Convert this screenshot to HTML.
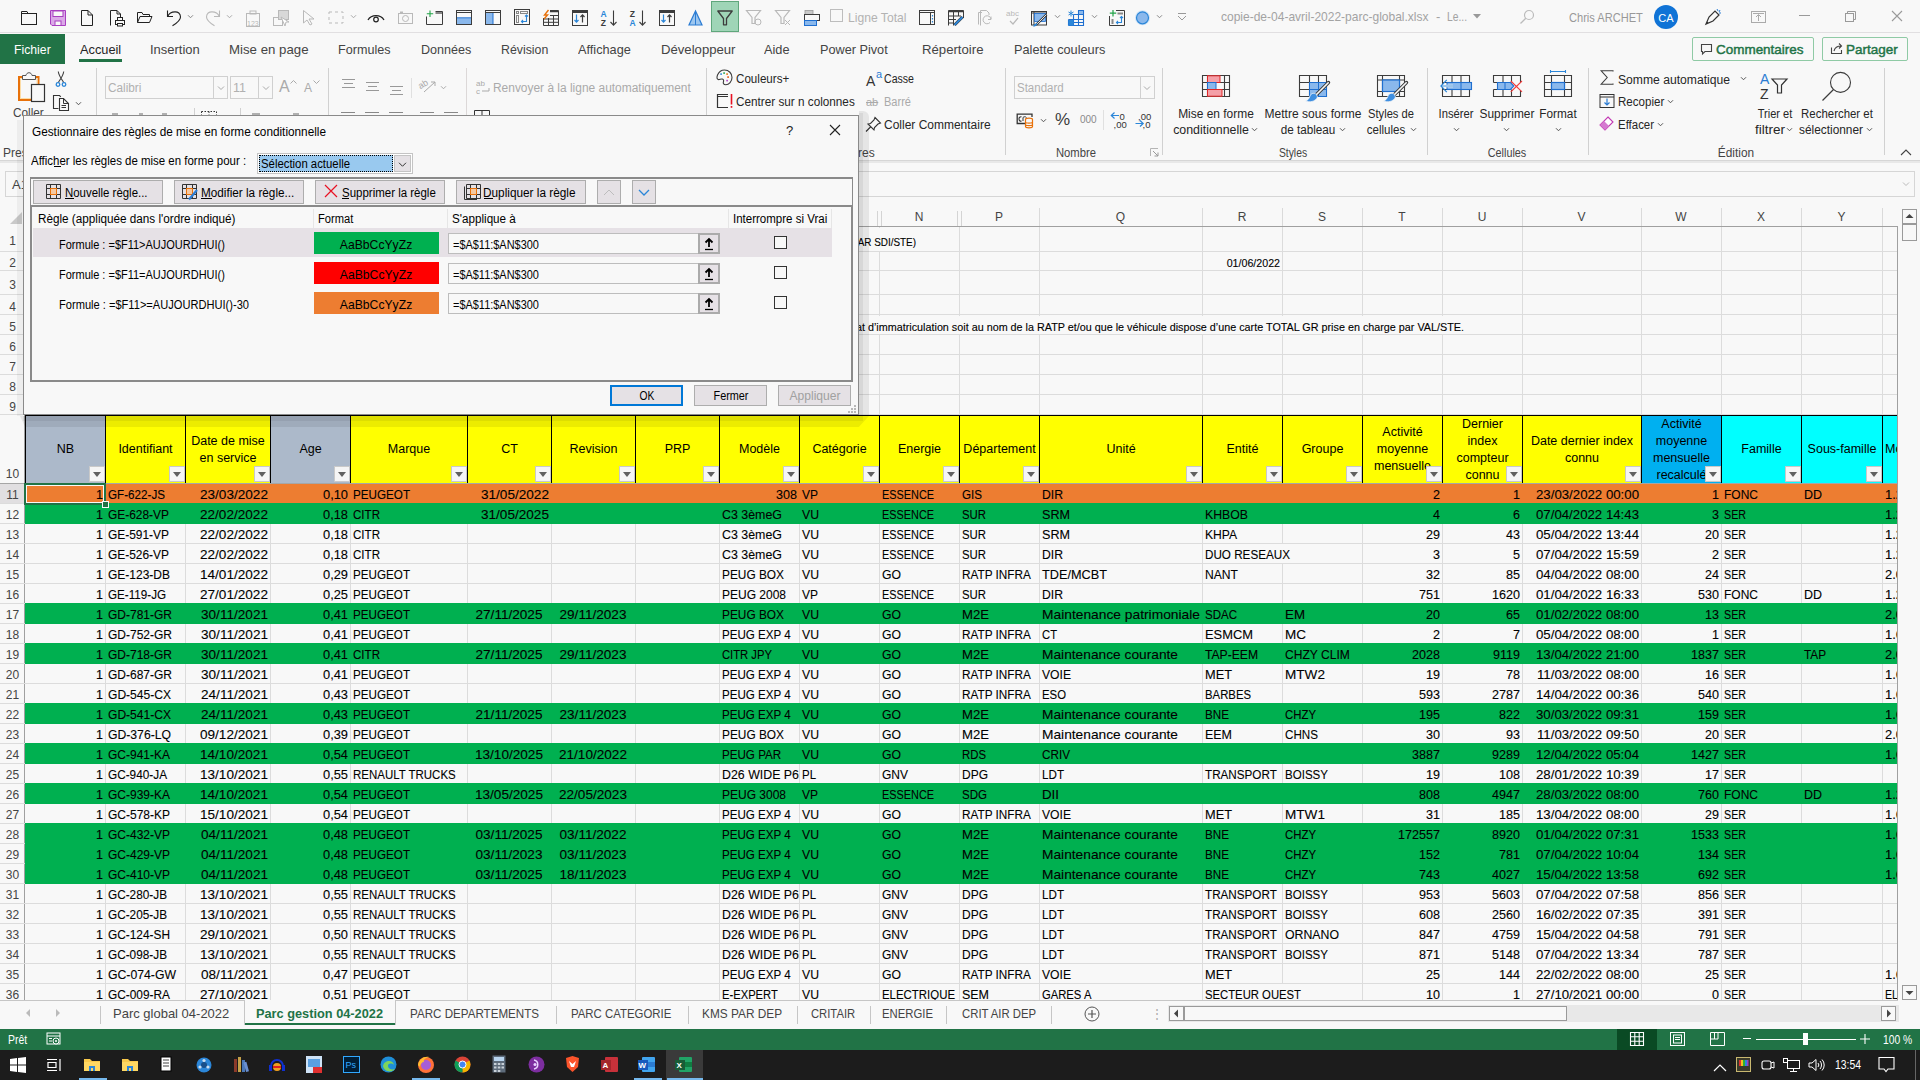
<!DOCTYPE html><html><head><meta charset="utf-8"><title>Excel</title><style>

*{margin:0;padding:0;box-sizing:border-box}
html,body{width:1920px;height:1080px;overflow:hidden}
body{position:relative;background:#f8f8f8;font-family:"Liberation Sans",sans-serif;color:#262626}
.a{position:absolute}
.t{white-space:nowrap}
.ch{text-align:center;font-size:12px;line-height:20px;color:#444}
.rh{text-align:center;font-size:12px;color:#444}
.c{font-size:13px;line-height:20px;color:#000;white-space:nowrap;-webkit-text-stroke:0.1px #000}
.hd{font-size:12.5px;line-height:17px;color:#000;text-align:center;display:flex;align-items:center;justify-content:center;white-space:nowrap}
.fb{position:absolute;width:16px;height:16px;background:#f5f5f5;border:1px solid #c9c9c9}
.fb:after{content:"";position:absolute;left:3px;top:5px;border-left:4px solid transparent;border-right:4px solid transparent;border-top:5px solid #606060}
.rb{font-size:12px;color:#262626}
.dlg{font-size:12px;color:#000}
.btn{position:absolute;background:#e5e1e5;border:1px solid #adadad}
svg{overflow:visible}

</style></head><body>
<div class="a" style="left:0;top:0;width:1920px;height:33px;background:#f8f8f8;border-bottom:1px solid #e1dfe1"></div>
<svg class="a" style="left:20px;top:10px;" width="18" height="15" viewBox="0 0 18 15"><rect x="1.5" y="3.5" width="15" height="11" fill="none" stroke="#222"/><path d="M1.5 3.5 V1.5 H7 L8 3.5" fill="none" stroke="#222"/></svg>
<svg class="a" style="left:50px;top:10px;" width="17" height="17" viewBox="0 0 17 17"><path d="M0.5 0.5 H15.5 V15.5 H2 L0.5 14 Z" fill="#dba8e8" stroke="#a83fc0"/><rect x="3" y="1" width="10" height="5.5" fill="#f8f8f8" stroke="#a83fc0"/><rect x="5" y="11" width="6" height="4.5" fill="#f8f8f8" stroke="#a83fc0"/></svg>
<svg class="a" style="left:80px;top:9px;" width="14" height="18" viewBox="0 0 14 18"><path d="M1.5 1.5 H8 L12.5 6 V16.5 H1.5 Z M8 1.5 V6 H12.5" fill="none" stroke="#222"/></svg>
<svg class="a" style="left:109px;top:9px;" width="17" height="18" viewBox="0 0 17 18"><path d="M1.5 16.5 V1.5 H8 L11.5 5 V8" fill="none" stroke="#222"/><path d="M8 1.5 V5 H11.5" fill="none" stroke="#222"/><rect x="6.5" y="11.5" width="9" height="4" fill="#f8f8f8" stroke="#222"/><rect x="8.5" y="8.5" width="5" height="3" fill="#f8f8f8" stroke="#222"/><rect x="8.5" y="14.5" width="5" height="2.5" fill="#f8f8f8" stroke="#222"/></svg>
<svg class="a" style="left:136px;top:11px;" width="17" height="13" viewBox="0 0 17 13"><path d="M1.5 11.5 V1.5 H6 L7 3.5 H13.5 V5.5" fill="none" stroke="#222"/><path d="M1.5 11.5 L4 5.5 H16 L13.5 11.5 Z" fill="none" stroke="#222"/></svg>
<svg class="a" style="left:166px;top:9px;" width="16" height="18" viewBox="0 0 16 18"><path d="M1.5 1.5 V7.5 H7" fill="none" stroke="#222" stroke-width="1.1"/><path d="M1.8 7.2 C4 2 14.5 0.5 14.5 8 C14.5 11 11 14 6.5 16.8" fill="none" stroke="#222" stroke-width="1.1"/></svg>
<svg class="a" style="left:186.5px;top:13.5px;" width="7.0" height="5.0" viewBox="0 0 7.0 5.0"><polyline points="1,1.25 3.5,3.75 6.0,1.25" fill="none" stroke="#888" stroke-width="1"/></svg>
<svg class="a" style="left:205px;top:9px;" width="16" height="18" viewBox="0 0 16 18"><path d="M14.5 1.5 V7.5 H9" fill="none" stroke="#b9b9b9" stroke-width="1.1"/><path d="M14.2 7.2 C12 2 1.5 0.5 1.5 8 C1.5 11 5 14 9.5 16.8" fill="none" stroke="#b9b9b9" stroke-width="1.1"/></svg>
<svg class="a" style="left:225.5px;top:13.5px;" width="7.0" height="5.0" viewBox="0 0 7.0 5.0"><polyline points="1,1.25 3.5,3.75 6.0,1.25" fill="none" stroke="#aaa" stroke-width="1"/></svg>
<svg class="a" style="left:245px;top:10px;" width="16" height="17" viewBox="0 0 16 17"><rect x="1.5" y="3.5" width="13" height="13" fill="none" stroke="#b9b9b9"/><rect x="5" y="1" width="6" height="3" fill="none" stroke="#b9b9b9"/><text x="2" y="16" font-size="7" fill="#b9b9b9" font-family="Liberation Sans">123</text></svg>
<svg class="a" style="left:272px;top:9px;" width="18" height="18" viewBox="0 0 18 18"><rect x="1.5" y="8.5" width="9" height="8" fill="none" stroke="#b9b9b9"/><rect x="6.5" y="1.5" width="10" height="9" fill="#d8d8d8" stroke="#b9b9b9"/><path d="M9 8 L13 17 L14 13 L17 13 Z" fill="#fff" stroke="#b9b9b9"/></svg>
<svg class="a" style="left:302px;top:9px;" width="14" height="17" viewBox="0 0 14 17"><path d="M1.5 1.5 L1.5 14 L5 11 L8 16 L10 15 L7 10 L12 10 Z" fill="none" stroke="#b9b9b9"/></svg>
<svg class="a" style="left:327px;top:10px;" width="18" height="15" viewBox="0 0 18 15"><rect x="2" y="2" width="14" height="11" fill="none" stroke="#b9b9b9" stroke-dasharray="3,3"/></svg>
<svg class="a" style="left:349.5px;top:13.5px;" width="7.0" height="5.0" viewBox="0 0 7.0 5.0"><polyline points="1,1.25 3.5,3.75 6.0,1.25" fill="none" stroke="#aaa" stroke-width="1"/></svg>
<svg class="a" style="left:367px;top:11px;" width="18" height="12" viewBox="0 0 18 12"><path d="M1 9 A9 8 0 0 1 17 9" fill="none" stroke="#222" stroke-width="1.3"/><circle cx="9" cy="8.5" r="2.3" fill="none" stroke="#222" stroke-width="1.2"/></svg>
<svg class="a" style="left:397px;top:10px;" width="17" height="15" viewBox="0 0 17 15"><rect x="1.5" y="3.5" width="14" height="10" fill="none" stroke="#b9b9b9"/><circle cx="8.5" cy="8.5" r="3" fill="none" stroke="#b9b9b9"/><rect x="3" y="1.5" width="3" height="2" fill="#b9b9b9"/></svg>
<svg class="a" style="left:426px;top:10px;" width="18" height="16" viewBox="0 0 18 16"><path d="M0.5 6.5 V14.5 H16.5 V1.5 H9.5" fill="none" stroke="#3c3c3c"/><path d="M9.5 3 H16.5" stroke="#3c3c3c" stroke-width="1.2"/><path d="M4 0.5 V7 M0.8 3.8 H7.2" stroke="#21a347" stroke-width="1.1"/></svg>
<svg class="a" style="left:456px;top:10px;" width="17" height="16" viewBox="0 0 17 16"><rect x="0.5" y="0.5" width="15" height="14" fill="none" stroke="#3c3c3c"/><path d="M0.5 2.5 H15.5" stroke="#3c3c3c"/><rect x="1" y="8" width="14" height="6" fill="#8ab8ec"/><path d="M1 7.8 H15" stroke="#1f6fd0"/></svg>
<svg class="a" style="left:485px;top:10px;" width="17" height="16" viewBox="0 0 17 16"><rect x="0.5" y="0.5" width="15" height="14" fill="none" stroke="#3c3c3c"/><path d="M0.5 2.5 H15.5" stroke="#3c3c3c"/><rect x="1" y="3" width="7" height="11" fill="#8ab8ec"/><path d="M8 3 V14" stroke="#1f6fd0"/></svg>
<svg class="a" style="left:514px;top:9px;" width="17" height="17" viewBox="0 0 17 17"><rect x="0.5" y="0.5" width="15" height="15" fill="none" stroke="#3c3c3c"/><rect x="2.5" y="2.5" width="2" height="2" fill="none" stroke="#888"/><rect x="6.5" y="2.5" width="7" height="2" fill="none" stroke="#888"/><rect x="2.5" y="6.5" width="2" height="7" fill="none" stroke="#888"/><path d="M12.5 6 V12.5 H7.5" fill="none" stroke="#2b86d8" stroke-width="1.1"/><path d="M11 7.5 L12.5 6 L14 7.5 M9 11 L7.5 12.5 L9 14" fill="none" stroke="#2b86d8" stroke-width="1.1"/></svg>
<svg class="a" style="left:543px;top:10px;" width="17" height="16" viewBox="0 0 17 16"><path d="M0.5 0.5 H15.5 V15.5 H0.5 Z M0.5 5.5 H15.5 M0.5 9 H15.5 M0.5 12.3 H15.5 M5.5 5.5 V15.5 M10.5 5.5 V15.5" fill="none" stroke="#3c3c3c"/><path d="M0.5 1.5 H15.5" stroke="#3c3c3c" stroke-width="1.5"/><rect x="0" y="0" width="7" height="8" fill="#f8f8f8"/><path d="M5.5 0 L1.5 5 H4.5 L1 9" fill="none" stroke="#e8710a" stroke-width="1.4"/></svg>
<svg class="a" style="left:572px;top:10px;" width="17" height="17" viewBox="0 0 17 17"><rect x="0.5" y="0.5" width="15" height="15" fill="none" stroke="#3c3c3c"/><path d="M0.5 2 H15.5" stroke="#3c3c3c" stroke-width="2"/><path d="M4.5 4.5 V12 M2.5 10 L4.5 12.2 L6.5 10" fill="none" stroke="#2b86d8" stroke-width="1.2"/><path d="M10.5 12.5 V5 M8.5 7 L10.5 4.8 L12.5 7" fill="none" stroke="#3c3c3c" stroke-width="1.2"/></svg>
<svg class="a" style="left:600px;top:10px;" width="18" height="17" viewBox="0 0 18 17"><text x="0.5" y="6.5" font-size="8.5" font-weight="bold" fill="#2b86d8" font-family="Liberation Sans">A</text><text x="0.8" y="15.5" font-size="8.5" font-weight="bold" fill="#3c3c3c" font-family="Liberation Sans">Z</text><path d="M13.5 0.5 V15 M10.5 12 L13.5 15.2 L16.5 12" fill="none" stroke="#3c3c3c" stroke-width="1.1"/></svg>
<svg class="a" style="left:629px;top:10px;" width="18" height="17" viewBox="0 0 18 17"><text x="0.8" y="6.5" font-size="8.5" font-weight="bold" fill="#3c3c3c" font-family="Liberation Sans">Z</text><text x="0.5" y="15.5" font-size="8.5" font-weight="bold" fill="#2b86d8" font-family="Liberation Sans">A</text><path d="M13.5 0.5 V15 M10.5 12 L13.5 15.2 L16.5 12" fill="none" stroke="#3c3c3c" stroke-width="1.1"/></svg>
<svg class="a" style="left:659px;top:10px;" width="17" height="17" viewBox="0 0 17 17"><rect x="0.5" y="0.5" width="15" height="15" fill="none" stroke="#3c3c3c"/><path d="M0.5 2 H15.5" stroke="#3c3c3c" stroke-width="2"/><path d="M4.5 4.5 V12 M2.5 10 L4.5 12.2 L6.5 10" fill="none" stroke="#2b86d8" stroke-width="1.2"/><path d="M10.5 12.5 V5 M8.5 7 L10.5 4.8 L12.5 7" fill="none" stroke="#3c3c3c" stroke-width="1.2"/></svg>
<svg class="a" style="left:688px;top:10px;" width="15" height="16" viewBox="0 0 15 16"><path d="M7.5 1 L1 15 H14 Z" fill="#9cc6ef" stroke="#2b7cd3" stroke-width="1.2"/><path d="M7.5 1 V15" stroke="#2b7cd3"/></svg>
<div class="a" style="left:711px;top:1px;width:28px;height:31px;background:#9fd5b7;border:1px solid #5fa77c"></div>
<svg class="a" style="left:717px;top:10px;" width="16" height="16" viewBox="0 0 16 16"><path d="M0.8 1 H15.2 L9.5 8.5 V14.8 H6.5 V8.5 Z" fill="none" stroke="#3c3c3c" stroke-width="1.3" stroke-linejoin="round"/></svg>
<svg class="a" style="left:745px;top:9px;" width="17" height="17" viewBox="0 0 17 17"><path d="M1.5 1.5 H15.5 L10 8.5 V14.5 H7 V8.5 Z" fill="none" stroke="#b9b9b9" stroke-width="1.2"/><circle cx="13" cy="13" r="3" fill="none" stroke="#b9b9b9"/></svg>
<svg class="a" style="left:774px;top:9px;" width="17" height="17" viewBox="0 0 17 17"><path d="M1.5 1.5 H15.5 L10 8.5 V14.5 H7 V8.5 Z" fill="none" stroke="#b9b9b9" stroke-width="1.2"/><path d="M11 11 L16 16 M16 11 L11 16" stroke="#b9b9b9"/></svg>
<svg class="a" style="left:804px;top:10px;" width="17" height="16" viewBox="0 0 17 16"><rect x="1" y="0.5" width="8" height="4" fill="#c8c8c8" stroke="#9a9a9a" stroke-width="0.8"/><rect x="0.5" y="4.5" width="15" height="6" fill="#f8f8f8" stroke="#3c3c3c"/><rect x="0.5" y="10.5" width="12" height="5" fill="#8ab8ec" stroke="#1f6fd0"/></svg>
<div class="a" style="left:830px;top:9px;width:13px;height:13px;border:1px solid #bdbdbd"></div>
<div class="a t" style="left:848px;top:8px;line-height:20px;font-size:13px;color:#b3b3b3;transform-origin:left;transform:scaleX(0.9328);">Ligne Total</div>
<svg class="a" style="left:919px;top:10px;" width="17" height="16" viewBox="0 0 17 16"><rect x="0.5" y="0.5" width="15" height="14" fill="none" stroke="#3c3c3c"/><path d="M0.5 2.5 H15.5 M11.5 2.5 V14.5" stroke="#3c3c3c"/><path d="M13.5 5 V6.5 M13.5 8 V9.5 M13.5 11 V12.5" stroke="#2b86d8" stroke-width="1.2"/></svg>
<svg class="a" style="left:948px;top:10px;" width="17" height="16" viewBox="0 0 17 16"><path d="M0.5 15.5 V0.5 H15.5 V8 M0.5 6 H13 M0.5 9.5 H8 M0.5 13 H6 M5.5 2 V15.5 M10.5 2 V6" fill="none" stroke="#3c3c3c"/><path d="M0.5 1.5 H15.5" stroke="#3c3c3c" stroke-width="1.5"/><path d="M6.5 15 L14.5 7" stroke="#3c3c3c" stroke-width="3"/><path d="M6.5 15 L14.5 7" stroke="#2b86d8" stroke-width="1.8"/></svg>
<svg class="a" style="left:978px;top:10px;" width="16" height="16" viewBox="0 0 16 16"><path d="M0.5 14.5 V2.5 H4 M2.5 15.5 V0.5 H8.5 L11 3 V5" fill="none" stroke="#b9b9b9"/><path d="M13 9 A4 4 0 1 0 12 12.5 M13 6.5 V9.5 H10" fill="none" stroke="#b9b9b9"/></svg>
<svg class="a" style="left:1006px;top:8px;" width="15" height="18" viewBox="0 0 15 18"><text x="0" y="8" font-size="8" fill="#b9b9b9" font-family="Liberation Sans">abc</text><path d="M4 13 L7 16 L12 10" fill="none" stroke="#b9b9b9" stroke-width="1.2"/></svg>
<svg class="a" style="left:1031px;top:11px;" width="17" height="15" viewBox="0 0 17 15"><rect x="0.5" y="0.5" width="15" height="13.5" fill="none" stroke="#3c3c3c"/><path d="M0.5 2 H15.5 M3 0.5 V14" stroke="#3c3c3c"/><rect x="3.5" y="2.5" width="11" height="8" fill="#8ab8ec" stroke="#1f6fd0" stroke-width="0.8"/><path d="M5 14 L15.5 3.5" stroke="#3c3c3c" stroke-width="2.4"/><path d="M5.2 13.8 L15.3 3.7" stroke="#f8f8f8" stroke-width="0.9"/><path d="M6.5 12.5 C4 12 2.5 14 2 15.5 C4 15.5 6 15 6.5 12.5 Z" fill="#2b86d8"/></svg>
<svg class="a" style="left:1053.5px;top:13.5px;" width="7.0" height="5.0" viewBox="0 0 7.0 5.0"><polyline points="1,1.25 3.5,3.75 6.0,1.25" fill="none" stroke="#888" stroke-width="1"/></svg>
<svg class="a" style="left:1068px;top:10px;" width="17" height="16" viewBox="0 0 17 16"><path d="M0.5 9.5 H15.5 M0.5 12.5 H15.5 M5.5 4.5 V15.5 M10.5 0.5 V15.5 M0.5 15.5 H15.5 V0.5 H10.5 M15.5 4.5 H5.5 M0.5 9.5 V15.5" fill="none" stroke="#1f6fd0" stroke-width="1.1"/><rect x="10.5" y="0.5" width="5" height="4" fill="#8ab8ec" stroke="#1f6fd0"/><rect x="0.5" y="10" width="5" height="5.5" fill="#2b86d8"/><path d="M3 0.5 V6.5 M0.5 2 L5.5 5 M5.5 2 L0.5 5" stroke="#2b86d8" stroke-width="1"/></svg>
<svg class="a" style="left:1090.5px;top:13.5px;" width="7.0" height="5.0" viewBox="0 0 7.0 5.0"><polyline points="1,1.25 3.5,3.75 6.0,1.25" fill="none" stroke="#888" stroke-width="1"/></svg>
<svg class="a" style="left:1109px;top:10px;" width="17" height="16" viewBox="0 0 17 16"><path d="M0.5 6 V15.5 H15.5 V0.5 H7" fill="none" stroke="#3c3c3c"/><path d="M4 0 V6.5 M0.8 3.2 H7.2" stroke="#21a347" stroke-width="1.2"/><rect x="8.5" y="2.5" width="5.5" height="2" fill="#888"/><rect x="2.5" y="9" width="2" height="5" fill="#888"/><path d="M12.5 6.5 V12.5 H7.5 M11 8 L12.5 6.5 L14 8 M9 11 L7.5 12.5 L9 14" fill="none" stroke="#2b86d8" stroke-width="1.1"/></svg>
<svg class="a" style="left:1134px;top:10px;" width="17" height="17" viewBox="0 0 17 17"><circle cx="8.5" cy="7.8" r="7.5" fill="#cfe3f7"/><circle cx="8.5" cy="7.8" r="6" fill="#8ab8ec" stroke="#2b86d8" stroke-width="1.2"/></svg>
<svg class="a" style="left:1155.5px;top:13.5px;" width="7.0" height="5.0" viewBox="0 0 7.0 5.0"><polyline points="1,1.25 3.5,3.75 6.0,1.25" fill="none" stroke="#888" stroke-width="1"/></svg>
<svg class="a" style="left:1177px;top:13px;" width="10" height="8" viewBox="0 0 10 8"><path d="M1 0.5 H9" stroke="#999"/><polyline points="1,3 5,7 9,3" fill="none" stroke="#999"/></svg>
<div class="a t" style="left:1221px;top:7px;line-height:20px;font-size:13px;color:#a3a3a3;transform-origin:left;transform:scaleX(0.9234);">copie-de-04-avril-2022-parc-global.xlsx</div>
<div class="a t" style="left:1436px;top:7px;line-height:20px;font-size:13px;color:#a3a3a3;transform-origin:left;">-</div>
<div class="a t" style="left:1447px;top:7px;line-height:20px;font-size:13px;color:#a3a3a3;transform-origin:left;transform:scaleX(0.7907);">Le...</div>
<svg class="a" style="left:1473px;top:14px;" width="8" height="5" viewBox="0 0 8 5"><polygon points="0,0 8,0 4,4.5" fill="#999"/></svg>
<svg class="a" style="left:1519px;top:9px;" width="16" height="16" viewBox="0 0 16 16"><circle cx="10" cy="6" r="4.5" fill="none" stroke="#bbb" stroke-width="1.2"/><path d="M6.8 9.2 L1.5 14.5" stroke="#bbb" stroke-width="1.3"/></svg>
<div class="a t" style="left:1569px;top:8px;line-height:20px;font-size:13px;color:#999;transform-origin:left;transform:scaleX(0.8525);">Chris ARCHET</div>
<div class="a" style="left:1654px;top:5px;width:24px;height:24px;border-radius:50%;background:#1073d6"></div>
<div class="a t" style="left:1516px;width:300px;text-align:center;top:8px;line-height:20px;font-size:11px;color:#fff;transform-origin:center;">CA</div>
<svg class="a" style="left:1704px;top:8px;" width="18" height="18" viewBox="0 0 18 18"><path d="M2 16 L5 9 L11 3 L15 7 L9 13 Z M2 16 L4 14" fill="none" stroke="#333" stroke-width="1.2"/><path d="M13 1 L14 3 M16 2 L15 4 M17 5 L15 5" stroke="#2b7cd3"/></svg>
<svg class="a" style="left:1750px;top:10px;" width="17" height="14" viewBox="0 0 17 14"><rect x="1.5" y="1.5" width="14" height="11" fill="none" stroke="#aaa"/><path d="M8.5 11 V5 M6 7 L8.5 4.5 L11 7 M3 3.5 H14" fill="none" stroke="#aaa"/></svg>
<div class="a" style="left:1799px;top:15px;width:11px;height:1px;background:#9a9a9a"></div>
<svg class="a" style="left:1844px;top:10px;" width="12" height="12" viewBox="0 0 12 12"><rect x="1.5" y="3.5" width="8" height="8" fill="none" stroke="#9a9a9a"/><path d="M3.5 3.5 V1.5 H11.5 V9.5 H9.5" fill="none" stroke="#9a9a9a"/></svg>
<svg class="a" style="left:1891px;top:10px;" width="12" height="12" viewBox="0 0 12 12"><path d="M1 1 L11 11 M11 1 L1 11" stroke="#9a9a9a" stroke-width="1.1"/></svg>
<div class="a" style="left:0;top:0px;width:65px;height:0"></div>
<div class="a" style="left:0;top:34px;width:65px;height:30px;background:#217346"></div>
<div class="a t" style="left:14px;top:40px;line-height:20px;font-size:13px;color:#fff;transform-origin:left;transform:scaleX(0.9409);">Fichier</div>
<div class="a t" style="left:79.7px;top:40px;line-height:20px;font-size:13px;color:#262626;transform-origin:left;transform:scaleX(0.9831);">Accueil</div>
<div class="a t" style="left:150px;top:40px;line-height:20px;font-size:13px;color:#444;transform-origin:left;transform:scaleX(0.9968);">Insertion</div>
<div class="a t" style="left:229.2px;top:40px;line-height:20px;font-size:13px;color:#444;transform-origin:left;transform:scaleX(1.0186);">Mise en page</div>
<div class="a t" style="left:338.3px;top:40px;line-height:20px;font-size:13px;color:#444;transform-origin:left;transform:scaleX(0.9690);">Formules</div>
<div class="a t" style="left:421.3px;top:40px;line-height:20px;font-size:13px;color:#444;transform-origin:left;transform:scaleX(0.9666);">Données</div>
<div class="a t" style="left:501.3px;top:40px;line-height:20px;font-size:13px;color:#444;transform-origin:left;transform:scaleX(0.9488);">Révision</div>
<div class="a t" style="left:578px;top:40px;line-height:20px;font-size:13px;color:#444;transform-origin:left;transform:scaleX(0.9778);">Affichage</div>
<div class="a t" style="left:661.3px;top:40px;line-height:20px;font-size:13px;color:#444;transform-origin:left;transform:scaleX(1.0106);">Développeur</div>
<div class="a t" style="left:764.2px;top:40px;line-height:20px;font-size:13px;color:#444;transform-origin:left;transform:scaleX(0.9801);">Aide</div>
<div class="a t" style="left:820.3px;top:40px;line-height:20px;font-size:13px;color:#444;transform-origin:left;transform:scaleX(0.9761);">Power Pivot</div>
<div class="a t" style="left:922.2px;top:40px;line-height:20px;font-size:13px;color:#444;transform-origin:left;transform:scaleX(1.0132);">Répertoire</div>
<div class="a t" style="left:1014.2px;top:40px;line-height:20px;font-size:13px;color:#444;transform-origin:left;transform:scaleX(0.9794);">Palette couleurs</div>
<div class="a" style="left:79px;top:59px;width:43px;height:3px;background:#217346"></div>
<div class="a" style="left:1692px;top:37px;width:122px;height:24px;border:1px solid #8fcaa5;border-radius:2px;background:#f8f8f8"></div>
<svg class="a" style="left:1700px;top:43px;" width="13" height="12" viewBox="0 0 13 12"><path d="M1.5 1.5 H11.5 V8.5 H5 L2.5 11 V8.5 H1.5 Z" fill="none" stroke="#444" stroke-width="1.1"/></svg>
<div class="a t" style="left:1716px;top:40px;line-height:20px;font-size:13.5px;color:#217346;transform-origin:left;transform:scaleX(0.9969);-webkit-text-stroke:0.45px #217346;">Commentaires</div>
<div class="a" style="left:1822px;top:37px;width:86px;height:24px;border:1px solid #8fcaa5;border-radius:2px;background:#f8f8f8"></div>
<svg class="a" style="left:1830px;top:42px;" width="14" height="13" viewBox="0 0 14 13"><path d="M1.5 5.5 V11.5 H11.5 V8" fill="none" stroke="#444" stroke-width="1.1"/><path d="M4 9 C5 5 8 4 11 4 M9 1.5 L11.5 4 L9 6.5" fill="none" stroke="#444" stroke-width="1.1"/></svg>
<div class="a t" style="left:1846px;top:40px;line-height:20px;font-size:13.5px;color:#217346;transform-origin:left;transform:scaleX(0.9994);-webkit-text-stroke:0.45px #217346;">Partager</div>
<div class="a" style="left:0;top:64px;width:1920px;height:96px;background:#f8f8f8"></div>
<div class="a" style="left:0;top:160px;width:1920px;height:1px;background:#d6d6d6"></div>
<div class="a" style="left:0;top:161px;width:1920px;height:2px;background:#e8e8e8"></div>
<svg class="a" style="left:17px;top:71px;" width="29" height="32" viewBox="0 0 29 32"><rect x="2" y="6" width="19.5" height="23" fill="none" stroke="#e8710a" stroke-width="2"/><rect x="3.5" y="7.5" width="16.5" height="20" fill="none" stroke="#fcdca6" stroke-width="1"/><path d="M5.5 8.5 V4.5 H9 C9.5 0.8 14.5 0.8 15 4.5 H18.5 V8.5 Z" fill="#f8f8f8" stroke="#555" stroke-width="1"/><rect x="14.5" y="13.5" width="13" height="17" fill="#f8f8f8" stroke="#333" stroke-width="1.2"/></svg>
<div class="a t" style="left:13px;top:103px;line-height:20px;font-size:12.5px;color:#444;transform-origin:left;transform:scaleX(0.9434);">Coller</div>
<svg class="a" style="left:55px;top:71px;" width="12" height="16" viewBox="0 0 12 16"><path d="M3.3 0.5 C3.5 4 5 6 8.8 11.5 M8.7 0.5 C8.5 4 7 6 3.2 11.5" fill="none" stroke="#444" stroke-width="1.1"/><circle cx="3" cy="13.5" r="1.8" fill="none" stroke="#2b86d8" stroke-width="1.3"/><circle cx="9" cy="13.5" r="1.8" fill="none" stroke="#2b86d8" stroke-width="1.3"/></svg>
<svg class="a" style="left:52px;top:94px;" width="18" height="18" viewBox="0 0 18 18"><path d="M6.5 14.5 H1.5 V1.5 H7.5 L8.8 2.8" fill="none" stroke="#333" stroke-width="1.1"/><path d="M7.5 4.5 H11.5 L16.5 9.5 V16.5 H7.5 Z" fill="#f8f8f8" stroke="#333" stroke-width="1.1"/><path d="M11.5 4.5 V9.5 H16.5 M9.5 11.5 H14 M9.5 13.5 H14" fill="none" stroke="#333"/></svg>
<svg class="a" style="left:74.5px;top:100.5px;" width="7.0" height="5.0" viewBox="0 0 7.0 5.0"><polyline points="1,1.25 3.5,3.75 6.0,1.25" fill="none" stroke="#555" stroke-width="1"/></svg>
<div class="a" style="left:96px;top:68px;width:1px;height:87px;background:#d1d1d1"></div>
<div class="a" style="left:105px;top:76px;width:123px;height:23px;border:1px solid #d0d0d0;background:#f8f8f8"></div>
<div class="a" style="left:213px;top:77px;width:1px;height:21px;background:#d0d0d0"></div>
<div class="a t" style="left:108px;top:78px;line-height:20px;font-size:12.5px;color:#b0b0b0;transform-origin:left;transform:scaleX(0.9400);">Calibri</div>
<svg class="a" style="left:217px;top:85px;" width="8" height="6" viewBox="0 0 8 6"><polyline points="1,1.5 4,4.5 7,1.5" fill="none" stroke="#aaa" stroke-width="1"/></svg>
<div class="a" style="left:230px;top:76px;width:43px;height:23px;border:1px solid #d0d0d0;background:#f8f8f8"></div>
<div class="a" style="left:258px;top:77px;width:1px;height:21px;background:#d0d0d0"></div>
<div class="a t" style="left:233px;top:78px;line-height:20px;font-size:12.5px;color:#b0b0b0;transform-origin:left;">11</div>
<svg class="a" style="left:262px;top:85px;" width="8" height="6" viewBox="0 0 8 6"><polyline points="1,1.5 4,4.5 7,1.5" fill="none" stroke="#aaa" stroke-width="1"/></svg>
<div class="a t" style="left:279px;top:77px;line-height:20px;font-size:16px;color:#aaa;transform-origin:left;">A</div>
<div class="a t" style="left:304px;top:78px;line-height:20px;font-size:12px;color:#aaa;transform-origin:left;">A</div>
<svg class="a" style="left:290px;top:80px;" width="7" height="4" viewBox="0 0 7 4"><polyline points="0.5,3.5 3.5,0.5 6.5,3.5" fill="none" stroke="#aaa"/></svg>
<svg class="a" style="left:313px;top:80px;" width="7" height="4" viewBox="0 0 7 4"><polyline points="0.5,0.5 3.5,3.5 6.5,0.5" fill="none" stroke="#aaa"/></svg>
<div class="a" style="left:328px;top:68px;width:1px;height:87px;background:#d1d1d1"></div>
<svg class="a" style="left:341px;top:78px;" width="15" height="14" viewBox="0 0 15 14"><path d="M1 1.5 H14" stroke="#999"/><path d="M3 5.5 H12" stroke="#999"/><path d="M1 9.5 H14" stroke="#999"/></svg>
<svg class="a" style="left:365px;top:81px;" width="15" height="14" viewBox="0 0 15 14"><path d="M1 1.5 H14" stroke="#999"/><path d="M3 5.5 H12" stroke="#999"/><path d="M1 9.5 H14" stroke="#999"/></svg>
<svg class="a" style="left:389px;top:85px;" width="15" height="14" viewBox="0 0 15 14"><path d="M1 1.5 H14" stroke="#999"/><path d="M3 5.5 H12" stroke="#999"/><path d="M1 9.5 H14" stroke="#999"/></svg>
<div class="a" style="left:411px;top:78px;width:1px;height:20px;background:#e0e0e0"></div>
<svg class="a" style="left:419px;top:78px;" width="20" height="16" viewBox="0 0 20 16"><text x="0" y="9" font-size="9" fill="#aaa" transform="rotate(-30 5 8)">ab</text><path d="M5 14 L16 4 M12 4 H16 V8" fill="none" stroke="#aaa"/></svg>
<svg class="a" style="left:439.5px;top:84.5px;" width="7.0" height="5.0" viewBox="0 0 7.0 5.0"><polyline points="1,1.25 3.5,3.75 6.0,1.25" fill="none" stroke="#aaa" stroke-width="1"/></svg>
<div class="a" style="left:466px;top:68px;width:1px;height:87px;background:#dcd8d8"></div>
<svg class="a" style="left:476px;top:79px;" width="15" height="17" viewBox="0 0 15 17"><text x="0" y="7" font-size="8" fill="#aaa">ab</text><text x="0" y="15" font-size="8" fill="#aaa">c</text><path d="M6 12 H13 V9" fill="none" stroke="#aaa"/></svg>
<div class="a t" style="left:493px;top:78px;line-height:20px;font-size:12.5px;color:#aaa;transform-origin:left;transform:scaleX(0.9550);">Renvoyer à la ligne automatiquement</div>
<div class="a" style="left:341px;top:112px;width:14px;height:1px;background:#888"></div>
<div class="a" style="left:365px;top:112px;width:14px;height:1px;background:#888"></div>
<div class="a" style="left:389px;top:112px;width:14px;height:1px;background:#888"></div>
<div class="a" style="left:420px;top:112px;width:14px;height:1px;background:#888"></div>
<div class="a" style="left:444px;top:112px;width:14px;height:1px;background:#888"></div>
<svg class="a" style="left:201px;top:110px;" width="16" height="6" viewBox="0 0 16 6"><path d="M0.5 1.5 H15.5 M0.5 1.5 V6 M15.5 1.5 V6 M8 1.5 V6" stroke="#333" stroke-dasharray="1.5,1.5"/></svg>
<svg class="a" style="left:474px;top:110px;" width="16" height="6" viewBox="0 0 16 6"><path d="M0.5 0.5 H15.5 V6 M0.5 0.5 V6 M8 0.5 V6" fill="none" stroke="#333"/><path d="M0.5 5.5 H15.5" stroke="#2b7cd3"/></svg>
<div class="a" style="left:112px;top:113px;width:6px;height:3px;background:#b0b0b0"></div>
<div class="a" style="left:139px;top:113px;width:4px;height:3px;background:#b0b0b0"></div>
<div class="a" style="left:162px;top:113px;width:5px;height:3px;background:#b0b0b0"></div>
<div class="a" style="left:252px;top:113px;width:8px;height:3px;background:#b0b0b0"></div>
<div class="a" style="left:293px;top:113px;width:6px;height:3px;background:#b0b0b0"></div>
<div class="a" style="left:194px;top:108px;width:1px;height:8px;background:#d1d1d1"></div>
<div class="a" style="left:240px;top:108px;width:1px;height:8px;background:#d1d1d1"></div>
<div class="a" style="left:706px;top:68px;width:1px;height:87px;background:#d1d1d1"></div>
<svg class="a" style="left:716px;top:69px;" width="17" height="17" viewBox="0 0 17 17"><path d="M8.5 1 C13 1 16 4.5 16 8.5 C16 12.5 13 15.8 9.8 15.8 C7.8 15.8 6.8 14.5 7.4 13 C7.9 11.8 7.6 10.4 6.3 10 C4.6 9.6 3.6 11 2.2 10.5 C0.8 10 0.8 8 1.5 6 C2.8 3 5.5 1 8.5 1 Z" fill="none" stroke="#3c3c3c" stroke-width="1.1"/><rect x="4.3" y="4.3" width="1.6" height="1.6" fill="#2b86d8"/><rect x="7.3" y="3.3" width="1.6" height="1.6" fill="#21a347"/><rect x="10.3" y="4.3" width="1.6" height="1.6" fill="#e8710a"/><rect x="11.3" y="7.3" width="1.6" height="1.6" fill="#e84a0a"/><rect x="10.3" y="10.8" width="1.6" height="1.6" fill="#b040c8"/></svg>
<div class="a t" style="left:736px;top:69px;line-height:20px;font-size:12.5px;color:#262626;transform-origin:left;transform:scaleX(0.9289);">Couleurs+</div>
<svg class="a" style="left:716px;top:93px;" width="17" height="16" viewBox="0 0 17 16"><path d="M12 1.5 H1.5 V14.5 H12 M1.5 3.5 H12" fill="none" stroke="#333" stroke-width="1.2"/><path d="M15.5 1 V11.5" stroke="#e81123" stroke-width="1.6"/><rect x="14.7" y="13" width="1.6" height="1.8" fill="#e81123"/></svg>
<div class="a t" style="left:736px;top:92px;line-height:20px;font-size:12.5px;color:#262626;transform-origin:left;transform:scaleX(0.9391);">Centrer sur n colonnes</div>
<div class="a t" style="left:866px;top:71px;line-height:20px;font-size:14px;color:#333;transform-origin:left;">A</div>
<div class="a t" style="left:876px;top:64px;line-height:20px;font-size:11px;color:#2b7cd3;transform-origin:left;">a</div>
<div class="a t" style="left:884px;top:69px;line-height:20px;font-size:12.5px;color:#262626;transform-origin:left;transform:scaleX(0.8467);">Casse</div>
<div class="a t" style="left:866px;top:92px;line-height:20px;font-size:11px;color:#aaa;transform-origin:left;text-decoration:line-through;">ab</div>
<div class="a t" style="left:884px;top:92px;line-height:20px;font-size:12.5px;color:#aaa;transform-origin:left;transform:scaleX(0.8833);">Barré</div>
<svg class="a" style="left:865px;top:116px;" width="17" height="17" viewBox="0 0 17 17"><path d="M10 1.5 L15.5 7 L13 8 L9.5 11.5 L9 14 L3 8 L5.5 7.5 L9 4 Z M5.5 11 L1 15.5" fill="none" stroke="#333" stroke-width="1.1"/></svg>
<div class="a t" style="left:884px;top:115px;line-height:20px;font-size:12.5px;color:#262626;transform-origin:left;transform:scaleX(0.9591);">Coller Commentaire</div>
<div class="a t" style="left:858px;top:143px;line-height:20px;font-size:12px;color:#444;transform-origin:left;">res</div>
<div class="a" style="left:1005px;top:68px;width:1px;height:87px;background:#d1d1d1"></div>
<div class="a" style="left:1014px;top:76px;width:141px;height:23px;border:1px solid #d0d0d0;background:#f8f8f8"></div>
<div class="a" style="left:1140px;top:77px;width:1px;height:21px;background:#d0d0d0"></div>
<div class="a t" style="left:1017px;top:78px;line-height:20px;font-size:12.5px;color:#b0b0b0;transform-origin:left;transform:scaleX(0.9205);">Standard</div>
<svg class="a" style="left:1143px;top:85px;" width="8" height="6" viewBox="0 0 8 6"><polyline points="1,1.5 4,4.5 7,1.5" fill="none" stroke="#aaa" stroke-width="1"/></svg>
<svg class="a" style="left:1016px;top:113px;" width="18" height="16" viewBox="0 0 18 16"><path d="M10 10.5 H1.2 V1.2 H16 V4" fill="none" stroke="#333" stroke-width="1.3"/><path d="M5.5 3.8 C3.5 3.5 3 5 3 6 C3 7.5 4 8.5 5.5 8" fill="none" stroke="#333" stroke-width="1.1"/><path d="M7 8 V4.5 C8 3.5 9.5 3.5 10.5 4.5" fill="none" stroke="#333" stroke-width="1"/><path d="M9.5 6.5 V13.5 C9.5 15.3 16.5 15.3 16.5 13.5 V6.5 C16.5 4.7 9.5 4.7 9.5 6.5 Z M9.5 9 C9.5 10.5 16.5 10.5 16.5 9 M9.5 11.5 C9.5 13 16.5 13 16.5 11.5" fill="#f8f8f8" stroke="#e8710a" stroke-width="1.2"/></svg>
<svg class="a" style="left:1039.5px;top:117.5px;" width="7.0" height="5.0" viewBox="0 0 7.0 5.0"><polyline points="1,1.25 3.5,3.75 6.0,1.25" fill="none" stroke="#555" stroke-width="1"/></svg>
<div class="a t" style="left:1055px;top:110px;line-height:20px;font-size:17px;color:#3c3c3c;transform-origin:left;">%</div>
<div class="a t" style="left:1080px;top:110px;line-height:20px;font-size:10px;color:#8a8a8a;transform-origin:left;">000</div>
<div class="a" style="left:1103px;top:110px;width:1px;height:20px;background:#e0e0e0"></div>
<svg class="a" style="left:1110px;top:111px;" width="19" height="18" viewBox="0 0 19 18"><path d="M1.5 4.5 H9 M4.5 1.5 L1.3 4.5 L4.5 7.5" fill="none" stroke="#2b86d8" stroke-width="1.2"/><text x="9.5" y="8.5" font-size="9.5" fill="#333">0</text><text x="3.5" y="17" font-size="9.5" fill="#333">,00</text></svg>
<svg class="a" style="left:1134px;top:111px;" width="19" height="18" viewBox="0 0 19 18"><text x="4" y="8.5" font-size="9.5" fill="#333">,00</text><path d="M1.5 12.5 H9 M6 9.5 L9.2 12.5 L6 15.5" fill="none" stroke="#2b86d8" stroke-width="1.2"/><text x="8.5" y="17" font-size="9.5" fill="#333">,0</text></svg>
<div class="a t" style="left:925.5px;width:300px;text-align:center;top:143px;line-height:20px;font-size:12.5px;color:#444;transform-origin:center;transform:scaleX(0.8997);">Nombre</div>
<svg class="a" style="left:1150px;top:148px;" width="9" height="9" viewBox="0 0 9 9"><path d="M0.5 8 V0.5 H8" fill="none" stroke="#b5b5b5"/><path d="M3 3 L8 8 M8 4.5 V8 H4.5" fill="none" stroke="#999"/></svg>
<div class="a" style="left:1162px;top:68px;width:1px;height:87px;background:#d1d1d1"></div>
<svg class="a" style="left:1202px;top:75px;" width="28" height="22" viewBox="0 0 28 22"><path d="M0.5 0.5 H27.5 V21.5 H0.5 Z M0.5 7.5 H27.5 M0.5 14.5 H27.5 M5.5 0.5 V21.5 M22.5 0.5 V21.5" fill="none" stroke="#3c3c3c" stroke-width="1.1"/><rect x="5.5" y="0.8" width="12.5" height="6.7" fill="#f4a0a8" stroke="#e02828"/><rect x="5.5" y="7.5" width="8.5" height="7" fill="#8ab8ec" stroke="#1f6fd0"/><rect x="5.5" y="14.5" width="14.5" height="6.7" fill="#f4a0a8" stroke="#e02828"/></svg>
<div class="a t" style="left:1066px;width:300px;text-align:center;top:104px;line-height:20px;font-size:12.5px;color:#262626;transform-origin:center;transform:scaleX(0.9559);">Mise en forme</div>
<div class="a t" style="left:1060.5px;width:300px;text-align:center;top:120px;line-height:20px;font-size:12.5px;color:#262626;transform-origin:center;transform:scaleX(0.9902);">conditionnelle</div>
<svg class="a" style="left:1250.5px;top:126.5px;" width="7.0" height="5.0" viewBox="0 0 7.0 5.0"><polyline points="1,1.25 3.5,3.75 6.0,1.25" fill="none" stroke="#555" stroke-width="1"/></svg>
<svg class="a" style="left:1299px;top:75px;" width="32" height="28" viewBox="0 0 32 28"><path d="M0.5 0.5 H27.5 V21.5 H0.5 Z M0.5 7.5 H27.5 M0.5 14.5 H27.5 M10.5 0.5 V21.5 M19.5 0.5 V21.5" fill="none" stroke="#3c3c3c" stroke-width="1.1"/><rect x="10.5" y="7.5" width="17" height="14" fill="#8ab8ec" stroke="#1f6fd0"/><path d="M10.5 14.5 H27.5 M19.5 7.5 V21.5" stroke="#1f6fd0"/><path d="M29.5 7.5 L16.5 20.5" stroke="#3c3c3c" stroke-width="3.4" stroke-linecap="round"/><path d="M29.2 7.8 L16.8 20.2" stroke="#f8f8f8" stroke-width="1.6" stroke-linecap="round"/><path d="M17.5 19.5 C15.5 17.5 12 18 11 21 C10 24 8.5 25.5 6.5 26 C10 27.5 16.5 27 18.5 22 Z" fill="#3f8fe0" stroke="#f8f8f8" stroke-width="0.7"/></svg>
<div class="a t" style="left:1162.8px;width:300px;text-align:center;top:104px;line-height:20px;font-size:12.5px;color:#262626;transform-origin:center;transform:scaleX(0.9610);">Mettre sous forme</div>
<div class="a t" style="left:1157.7px;width:300px;text-align:center;top:120px;line-height:20px;font-size:12.5px;color:#262626;transform-origin:center;transform:scaleX(0.9352);">de tableau</div>
<svg class="a" style="left:1338.5px;top:126.5px;" width="7.0" height="5.0" viewBox="0 0 7.0 5.0"><polyline points="1,1.25 3.5,3.75 6.0,1.25" fill="none" stroke="#555" stroke-width="1"/></svg>
<svg class="a" style="left:1377px;top:75px;" width="32" height="28" viewBox="0 0 32 28"><path d="M0.5 0.5 H27.5 V21.5 H0.5 Z M0.5 5 H27.5 M0.5 16.5 H27.5 M5.5 0.5 V21.5 M22.5 0.5 V21.5" fill="none" stroke="#3c3c3c" stroke-width="1.1"/><rect x="5.5" y="5" width="17" height="11.5" fill="#8ab8ec" stroke="#1f6fd0" stroke-width="1.2"/><path d="M29.5 7.5 L16.5 20.5" stroke="#3c3c3c" stroke-width="3.4" stroke-linecap="round"/><path d="M29.2 7.8 L16.8 20.2" stroke="#f8f8f8" stroke-width="1.6" stroke-linecap="round"/><path d="M17.5 19.5 C15.5 17.5 12 18 11 21 C10 24 8.5 25.5 6.5 26 C10 27.5 16.5 27 18.5 22 Z" fill="#3f8fe0" stroke="#f8f8f8" stroke-width="0.7"/></svg>
<div class="a t" style="left:1241.2px;width:300px;text-align:center;top:104px;line-height:20px;font-size:12.5px;color:#262626;transform-origin:center;transform:scaleX(0.8927);">Styles de</div>
<div class="a t" style="left:1235.7px;width:300px;text-align:center;top:120px;line-height:20px;font-size:12.5px;color:#262626;transform-origin:center;transform:scaleX(0.9235);">cellules</div>
<svg class="a" style="left:1409.5px;top:126.5px;" width="7.0" height="5.0" viewBox="0 0 7.0 5.0"><polyline points="1,1.25 3.5,3.75 6.0,1.25" fill="none" stroke="#555" stroke-width="1"/></svg>
<div class="a t" style="left:1143.4px;width:300px;text-align:center;top:143px;line-height:20px;font-size:12.5px;color:#444;transform-origin:center;transform:scaleX(0.8285);">Styles</div>
<div class="a" style="left:1427px;top:68px;width:1px;height:87px;background:#d1d1d1"></div>
<svg class="a" style="left:1440px;top:73px;" width="34" height="26" viewBox="0 0 34 26"><path d="M2.5 2.5 H29.5 V23.5 H2.5 Z M2.5 9.5 H29.5 M2.5 16.5 H29.5 M12 2.5 V23.5 M21 2.5 V23.5" fill="none" stroke="#3c3c3c" stroke-width="1.1"/><rect x="7" y="9.5" width="24.5" height="7" fill="#8ab8ec" stroke="#1f6fd0" stroke-width="1.1"/><path d="M21 9.5 V16.5" stroke="#1f6fd0"/><path d="M1 13 H13" stroke="#f8f8f8" stroke-width="2.5"/><path d="M1 13 H13" stroke="#2b86d8" stroke-width="0.9"/><path d="M6.8 6.8 L0.9 13 L6.8 19.2" fill="none" stroke="#2b86d8" stroke-width="1.2"/></svg>
<div class="a t" style="left:1305.6px;width:300px;text-align:center;top:104px;line-height:20px;font-size:12.5px;color:#262626;transform-origin:center;transform:scaleX(0.8971);">Insérer</div>
<svg class="a" style="left:1452.5px;top:126.5px;" width="7.0" height="5.0" viewBox="0 0 7.0 5.0"><polyline points="1,1.25 3.5,3.75 6.0,1.25" fill="none" stroke="#555" stroke-width="1"/></svg>
<svg class="a" style="left:1491px;top:73px;" width="34" height="26" viewBox="0 0 34 26"><path d="M2.5 9.5 V2.5 H29.5 V9 M29.5 17 V23.5 H2.5 V16.5 M2.5 9.5 H12 M2.5 16.5 H12 M12 2.5 V23.5 M20.5 2.5 V9.5 M20.5 16.5 V23.5" fill="none" stroke="#3c3c3c" stroke-width="1.1"/><path d="M6.5 9.5 H19.5 L22.8 13 L19.5 16.5 H6.5 Z" fill="#8ab8ec" stroke="#1f6fd0" stroke-width="1.1"/><path d="M14 9.5 V16.5" stroke="#1f6fd0"/><path d="M19.8 8 L31 18.8 M31 8 L19.8 18.8" stroke="#f03a3a" stroke-width="1.1"/></svg>
<div class="a t" style="left:1356.9px;width:300px;text-align:center;top:104px;line-height:20px;font-size:12.5px;color:#262626;transform-origin:center;transform:scaleX(0.9504);">Supprimer</div>
<svg class="a" style="left:1502.5px;top:126.5px;" width="7.0" height="5.0" viewBox="0 0 7.0 5.0"><polyline points="1,1.25 3.5,3.75 6.0,1.25" fill="none" stroke="#555" stroke-width="1"/></svg>
<svg class="a" style="left:1542px;top:69px;" width="34" height="30" viewBox="0 0 34 30"><path d="M2.5 6.5 H29.5 V27.5 H2.5 Z M2.5 13.5 H29.5 M2.5 20.5 H29.5 M9.5 6.5 V27.5 M22.5 6.5 V27.5" fill="none" stroke="#3c3c3c" stroke-width="1.1"/><rect x="9.5" y="13.5" width="13" height="7" fill="#8ab8ec" stroke="#1f6fd0" stroke-width="1.2"/><path d="M8.5 2.5 H23.5 M8.5 1 V4 M23.5 1 V4" stroke="#2b86d8" stroke-width="1.1"/></svg>
<div class="a t" style="left:1408.3px;width:300px;text-align:center;top:104px;line-height:20px;font-size:12.5px;color:#262626;transform-origin:center;transform:scaleX(0.9447);">Format</div>
<svg class="a" style="left:1554.5px;top:126.5px;" width="7.0" height="5.0" viewBox="0 0 7.0 5.0"><polyline points="1,1.25 3.5,3.75 6.0,1.25" fill="none" stroke="#555" stroke-width="1"/></svg>
<div class="a t" style="left:1357.2px;width:300px;text-align:center;top:143px;line-height:20px;font-size:12.5px;color:#444;transform-origin:center;transform:scaleX(0.8659);">Cellules</div>
<div class="a" style="left:1588px;top:68px;width:1px;height:87px;background:#d1d1d1"></div>
<svg class="a" style="left:1600px;top:70px;" width="14" height="15" viewBox="0 0 14 15"><path d="M13 1.5 V0.8 H1.2 L7.2 7.5 L1.2 14.2 H13 V13.5" fill="none" stroke="#3c3c3c" stroke-width="1.1" stroke-linejoin="miter"/></svg>
<div class="a t" style="left:1618px;top:70px;line-height:20px;font-size:12.5px;color:#262626;transform-origin:left;transform:scaleX(0.9711);">Somme automatique</div>
<svg class="a" style="left:1739.5px;top:75.5px;" width="7.0" height="5.0" viewBox="0 0 7.0 5.0"><polyline points="1,1.25 3.5,3.75 6.0,1.25" fill="none" stroke="#555" stroke-width="1"/></svg>
<svg class="a" style="left:1599px;top:93px;" width="16" height="16" viewBox="0 0 16 16"><rect x="1" y="1.5" width="14" height="13" fill="none" stroke="#333"/><path d="M1 4 H15" stroke="#333"/><path d="M8 5.5 V12 M5.5 9.5 L8 12 L10.5 9.5" fill="none" stroke="#2b7cd3" stroke-width="1.2"/></svg>
<div class="a t" style="left:1618px;top:92px;line-height:20px;font-size:12.5px;color:#262626;transform-origin:left;transform:scaleX(0.9245);">Recopier</div>
<svg class="a" style="left:1666.5px;top:98.5px;" width="7.0" height="5.0" viewBox="0 0 7.0 5.0"><polyline points="1,1.25 3.5,3.75 6.0,1.25" fill="none" stroke="#555" stroke-width="1"/></svg>
<svg class="a" style="left:1599px;top:116px;" width="15" height="16" viewBox="0 0 15 16"><path d="M9 1 L14 6 L6 14 L1 9 Z" fill="#fff" stroke="#c239b3" stroke-width="1.1"/><path d="M1 9 L5 5 L10 10 L6 14 Z" fill="#d57ad0"/></svg>
<div class="a t" style="left:1618px;top:115px;line-height:20px;font-size:12.5px;color:#262626;transform-origin:left;transform:scaleX(0.9154);">Effacer</div>
<svg class="a" style="left:1656.5px;top:121.5px;" width="7.0" height="5.0" viewBox="0 0 7.0 5.0"><polyline points="1,1.25 3.5,3.75 6.0,1.25" fill="none" stroke="#555" stroke-width="1"/></svg>
<svg class="a" style="left:1759px;top:72px;" width="30" height="29" viewBox="0 0 30 29"><text x="1" y="12" font-size="14" fill="#2b7cd3">A</text><text x="1" y="27" font-size="14" fill="#333">Z</text><path d="M13 7 H28 L22.5 13 V21 H18.5 V13 Z" fill="none" stroke="#333" stroke-width="1.2"/></svg>
<div class="a t" style="left:1624.5px;width:300px;text-align:center;top:104px;line-height:20px;font-size:12.5px;color:#262626;transform-origin:center;transform:scaleX(0.8841);">Trier et</div>
<div class="a t" style="left:1620px;width:300px;text-align:center;top:120px;line-height:20px;font-size:12.5px;color:#262626;transform-origin:center;transform:scaleX(1.0800);">filtrer</div>
<svg class="a" style="left:1785.5px;top:126.5px;" width="7.0" height="5.0" viewBox="0 0 7.0 5.0"><polyline points="1,1.25 3.5,3.75 6.0,1.25" fill="none" stroke="#555" stroke-width="1"/></svg>
<svg class="a" style="left:1821px;top:71px;" width="31" height="31" viewBox="0 0 31 31"><circle cx="19.5" cy="11.4" r="10" fill="none" stroke="#3c3c3c" stroke-width="1.1"/><path d="M12.5 18.5 L1.5 29.5" stroke="#3c3c3c" stroke-width="1.2"/></svg>
<div class="a t" style="left:1687.1px;width:300px;text-align:center;top:104px;line-height:20px;font-size:12.5px;color:#262626;transform-origin:center;transform:scaleX(0.9139);">Rechercher et</div>
<div class="a t" style="left:1681.25px;width:300px;text-align:center;top:120px;line-height:20px;font-size:12.5px;color:#262626;transform-origin:center;transform:scaleX(0.9495);">sélectionner</div>
<svg class="a" style="left:1865.5px;top:126.5px;" width="7.0" height="5.0" viewBox="0 0 7.0 5.0"><polyline points="1,1.25 3.5,3.75 6.0,1.25" fill="none" stroke="#555" stroke-width="1"/></svg>
<div class="a t" style="left:1585.6px;width:300px;text-align:center;top:143px;line-height:20px;font-size:12.5px;color:#444;transform-origin:center;transform:scaleX(0.9485);">Édition</div>
<div class="a" style="left:1884px;top:68px;width:1px;height:87px;background:#d1d1d1"></div>
<svg class="a" style="left:1900px;top:149px;" width="12" height="7" viewBox="0 0 12 7"><polyline points="1,6 6,1 11,6" fill="none" stroke="#444" stroke-width="1.1"/></svg>
<div class="a" style="left:0;top:163px;width:1920px;height:44px;background:#f8f8f8"></div>
<div class="a t" style="left:3px;top:143px;line-height:20px;font-size:12px;color:#444;transform-origin:left;">Pres</div>
<div class="a" style="left:5px;top:171px;width:80px;height:26px;border:1px solid #d6d6d6;background:#f8f8f8"></div>
<div class="a t" style="left:12px;top:175px;line-height:20px;font-size:13px;color:#444;transform-origin:left;">A1</div>
<div class="a" style="left:400px;top:171px;width:1515px;height:26px;border:1px solid #d6d6d6;background:#f8f8f8"></div>
<svg class="a" style="left:1902px;top:181px;" width="8" height="6" viewBox="0 0 8 6"><polyline points="1,1.5 4,4.5 7,1.5" fill="none" stroke="#bbb" stroke-width="1"/></svg>
<div class="a" style="left:0;top:197px;width:1898px;height:804px;overflow:hidden;background:#f8f8f8">
<div class="a" style="left:0;top:10px;width:1898px;height:20px;background:#f8f8f8;border-bottom:1px solid #a0a0a0"></div>
<div class="a" style="left:0;top:10px;width:25px;height:800px;background:#f8f8f8;border-right:1px solid #a0a0a0"></div>
<svg class="a" style="left:9px;top:14px" width="14" height="14"><polygon points="13,1 13,13 1,13" fill="#c9c9c9"/></svg>
<div class="a t ch" style="left:25px;top:10px;width:80px">A</div>
<div class="a" style="left:105px;top:11px;width:1px;height:18px;background:#dadada"></div>
<div class="a t ch" style="left:105px;top:10px;width:80px">B</div>
<div class="a" style="left:185px;top:11px;width:1px;height:18px;background:#dadada"></div>
<div class="a t ch" style="left:185px;top:10px;width:85px">C</div>
<div class="a" style="left:270px;top:11px;width:1px;height:18px;background:#dadada"></div>
<div class="a t ch" style="left:270px;top:10px;width:80px">D</div>
<div class="a" style="left:350px;top:11px;width:1px;height:18px;background:#dadada"></div>
<div class="a t ch" style="left:350px;top:10px;width:117px">E</div>
<div class="a" style="left:467px;top:11px;width:1px;height:18px;background:#dadada"></div>
<div class="a t ch" style="left:467px;top:10px;width:84px">F</div>
<div class="a" style="left:551px;top:11px;width:1px;height:18px;background:#dadada"></div>
<div class="a t ch" style="left:551px;top:10px;width:84px">G</div>
<div class="a" style="left:635px;top:11px;width:1px;height:18px;background:#dadada"></div>
<div class="a t ch" style="left:635px;top:10px;width:84px">H</div>
<div class="a" style="left:719px;top:11px;width:1px;height:18px;background:#dadada"></div>
<div class="a t ch" style="left:719px;top:10px;width:80px">I</div>
<div class="a" style="left:799px;top:11px;width:1px;height:18px;background:#dadada"></div>
<div class="a t ch" style="left:799px;top:10px;width:80px">J</div>
<div class="a" style="left:879px;top:11px;width:1px;height:18px;background:#dadada"></div>
<div class="a t ch" style="left:879px;top:10px;width:80px">N</div>
<div class="a" style="left:959px;top:11px;width:1px;height:18px;background:#dadada"></div>
<div class="a t ch" style="left:959px;top:10px;width:80px">P</div>
<div class="a" style="left:1039px;top:11px;width:1px;height:18px;background:#dadada"></div>
<div class="a t ch" style="left:1039px;top:10px;width:163px">Q</div>
<div class="a" style="left:1202px;top:11px;width:1px;height:18px;background:#dadada"></div>
<div class="a t ch" style="left:1202px;top:10px;width:80px">R</div>
<div class="a" style="left:1282px;top:11px;width:1px;height:18px;background:#dadada"></div>
<div class="a t ch" style="left:1282px;top:10px;width:80px">S</div>
<div class="a" style="left:1362px;top:11px;width:1px;height:18px;background:#dadada"></div>
<div class="a t ch" style="left:1362px;top:10px;width:80px">T</div>
<div class="a" style="left:1442px;top:11px;width:1px;height:18px;background:#dadada"></div>
<div class="a t ch" style="left:1442px;top:10px;width:80px">U</div>
<div class="a" style="left:1522px;top:11px;width:1px;height:18px;background:#dadada"></div>
<div class="a t ch" style="left:1522px;top:10px;width:119px">V</div>
<div class="a" style="left:1641px;top:11px;width:1px;height:18px;background:#dadada"></div>
<div class="a t ch" style="left:1641px;top:10px;width:80px">W</div>
<div class="a" style="left:1721px;top:11px;width:1px;height:18px;background:#dadada"></div>
<div class="a t ch" style="left:1721px;top:10px;width:80px">X</div>
<div class="a" style="left:1801px;top:11px;width:1px;height:18px;background:#dadada"></div>
<div class="a t ch" style="left:1801px;top:10px;width:81px">Y</div>
<div class="a" style="left:1882px;top:11px;width:1px;height:18px;background:#dadada"></div>
<div class="a t ch" style="left:1882px;top:10px;width:80px">Z</div>
<div class="a" style="left:1962px;top:11px;width:1px;height:18px;background:#dadada"></div>
<div class="a" style="left:879px;top:11px;width:1px;height:18px;background:#f8f8f8"></div>
<div class="a" style="left:959px;top:11px;width:1px;height:18px;background:#f8f8f8"></div>
<div class="a" style="left:877px;top:14px;width:1px;height:15px;background:#d4d4d4"></div>
<div class="a" style="left:881px;top:14px;width:1px;height:15px;background:#d4d4d4"></div>
<div class="a" style="left:957px;top:14px;width:1px;height:15px;background:#d4d4d4"></div>
<div class="a" style="left:961px;top:14px;width:1px;height:15px;background:#d4d4d4"></div>
<div class="a" style="left:105px;top:30px;width:1px;height:774px;background:#dcdcdc"></div>
<div class="a" style="left:185px;top:30px;width:1px;height:774px;background:#dcdcdc"></div>
<div class="a" style="left:270px;top:30px;width:1px;height:774px;background:#dcdcdc"></div>
<div class="a" style="left:350px;top:30px;width:1px;height:774px;background:#dcdcdc"></div>
<div class="a" style="left:467px;top:30px;width:1px;height:774px;background:#dcdcdc"></div>
<div class="a" style="left:551px;top:30px;width:1px;height:774px;background:#dcdcdc"></div>
<div class="a" style="left:635px;top:30px;width:1px;height:774px;background:#dcdcdc"></div>
<div class="a" style="left:719px;top:30px;width:1px;height:774px;background:#dcdcdc"></div>
<div class="a" style="left:799px;top:30px;width:1px;height:774px;background:#dcdcdc"></div>
<div class="a" style="left:879px;top:30px;width:1px;height:774px;background:#dcdcdc"></div>
<div class="a" style="left:959px;top:30px;width:1px;height:774px;background:#dcdcdc"></div>
<div class="a" style="left:1039px;top:30px;width:1px;height:774px;background:#dcdcdc"></div>
<div class="a" style="left:1202px;top:30px;width:1px;height:774px;background:#dcdcdc"></div>
<div class="a" style="left:1282px;top:30px;width:1px;height:774px;background:#dcdcdc"></div>
<div class="a" style="left:1362px;top:30px;width:1px;height:774px;background:#dcdcdc"></div>
<div class="a" style="left:1442px;top:30px;width:1px;height:774px;background:#dcdcdc"></div>
<div class="a" style="left:1522px;top:30px;width:1px;height:774px;background:#dcdcdc"></div>
<div class="a" style="left:1641px;top:30px;width:1px;height:774px;background:#dcdcdc"></div>
<div class="a" style="left:1721px;top:30px;width:1px;height:774px;background:#dcdcdc"></div>
<div class="a" style="left:1801px;top:30px;width:1px;height:774px;background:#dcdcdc"></div>
<div class="a" style="left:1882px;top:30px;width:1px;height:774px;background:#dcdcdc"></div>
<div class="a" style="left:0;top:54px;width:1898px;height:1px;background:#dcdcdc"></div>
<div class="a t rh" style="left:0;top:32px;width:25px;height:25px;line-height:25px">1</div>
<div class="a" style="left:0;top:73px;width:1898px;height:1px;background:#dcdcdc"></div>
<div class="a t rh" style="left:0;top:57px;width:25px;height:19px;line-height:19px">2</div>
<div class="a" style="left:0;top:97px;width:1898px;height:1px;background:#dcdcdc"></div>
<div class="a t rh" style="left:0;top:76px;width:25px;height:24px;line-height:24px">3</div>
<div class="a" style="left:0;top:117px;width:1898px;height:1px;background:#dcdcdc"></div>
<div class="a t rh" style="left:0;top:100px;width:25px;height:20px;line-height:20px">4</div>
<div class="a" style="left:0;top:137px;width:1898px;height:1px;background:#dcdcdc"></div>
<div class="a t rh" style="left:0;top:120px;width:25px;height:20px;line-height:20px">5</div>
<div class="a" style="left:0;top:157px;width:1898px;height:1px;background:#dcdcdc"></div>
<div class="a t rh" style="left:0;top:140px;width:25px;height:20px;line-height:20px">6</div>
<div class="a" style="left:0;top:177px;width:1898px;height:1px;background:#dcdcdc"></div>
<div class="a t rh" style="left:0;top:160px;width:25px;height:20px;line-height:20px">7</div>
<div class="a" style="left:0;top:197px;width:1898px;height:1px;background:#dcdcdc"></div>
<div class="a t rh" style="left:0;top:180px;width:25px;height:20px;line-height:20px">8</div>
<div class="a" style="left:0;top:217px;width:1898px;height:1px;background:#dcdcdc"></div>
<div class="a t rh" style="left:0;top:200px;width:25px;height:20px;line-height:20px">9</div>
<div class="a" style="left:0;top:286px;width:1898px;height:1px;background:#dcdcdc"></div>
<div class="a t rh" style="left:0;top:218px;width:25px;height:69px;line-height:20px;padding-top:49px">10</div>
<div class="a" style="left:0;top:306px;width:1898px;height:1px;background:#dcdcdc"></div>
<div class="a t rh" style="left:0;top:288px;width:25px;height:20px;line-height:20px">11</div>
<div class="a" style="left:0;top:326px;width:1898px;height:1px;background:#dcdcdc"></div>
<div class="a t rh" style="left:0;top:308px;width:25px;height:20px;line-height:20px">12</div>
<div class="a" style="left:0;top:346px;width:1898px;height:1px;background:#dcdcdc"></div>
<div class="a t rh" style="left:0;top:328px;width:25px;height:20px;line-height:20px">13</div>
<div class="a" style="left:0;top:366px;width:1898px;height:1px;background:#dcdcdc"></div>
<div class="a t rh" style="left:0;top:348px;width:25px;height:20px;line-height:20px">14</div>
<div class="a" style="left:0;top:386px;width:1898px;height:1px;background:#dcdcdc"></div>
<div class="a t rh" style="left:0;top:368px;width:25px;height:20px;line-height:20px">15</div>
<div class="a" style="left:0;top:406px;width:1898px;height:1px;background:#dcdcdc"></div>
<div class="a t rh" style="left:0;top:388px;width:25px;height:20px;line-height:20px">16</div>
<div class="a" style="left:0;top:426px;width:1898px;height:1px;background:#dcdcdc"></div>
<div class="a t rh" style="left:0;top:408px;width:25px;height:20px;line-height:20px">17</div>
<div class="a" style="left:0;top:446px;width:1898px;height:1px;background:#dcdcdc"></div>
<div class="a t rh" style="left:0;top:428px;width:25px;height:20px;line-height:20px">18</div>
<div class="a" style="left:0;top:466px;width:1898px;height:1px;background:#dcdcdc"></div>
<div class="a t rh" style="left:0;top:448px;width:25px;height:20px;line-height:20px">19</div>
<div class="a" style="left:0;top:486px;width:1898px;height:1px;background:#dcdcdc"></div>
<div class="a t rh" style="left:0;top:468px;width:25px;height:20px;line-height:20px">20</div>
<div class="a" style="left:0;top:506px;width:1898px;height:1px;background:#dcdcdc"></div>
<div class="a t rh" style="left:0;top:488px;width:25px;height:20px;line-height:20px">21</div>
<div class="a" style="left:0;top:526px;width:1898px;height:1px;background:#dcdcdc"></div>
<div class="a t rh" style="left:0;top:508px;width:25px;height:20px;line-height:20px">22</div>
<div class="a" style="left:0;top:546px;width:1898px;height:1px;background:#dcdcdc"></div>
<div class="a t rh" style="left:0;top:528px;width:25px;height:20px;line-height:20px">23</div>
<div class="a" style="left:0;top:566px;width:1898px;height:1px;background:#dcdcdc"></div>
<div class="a t rh" style="left:0;top:548px;width:25px;height:20px;line-height:20px">24</div>
<div class="a" style="left:0;top:586px;width:1898px;height:1px;background:#dcdcdc"></div>
<div class="a t rh" style="left:0;top:568px;width:25px;height:20px;line-height:20px">25</div>
<div class="a" style="left:0;top:606px;width:1898px;height:1px;background:#dcdcdc"></div>
<div class="a t rh" style="left:0;top:588px;width:25px;height:20px;line-height:20px">26</div>
<div class="a" style="left:0;top:626px;width:1898px;height:1px;background:#dcdcdc"></div>
<div class="a t rh" style="left:0;top:608px;width:25px;height:20px;line-height:20px">27</div>
<div class="a" style="left:0;top:646px;width:1898px;height:1px;background:#dcdcdc"></div>
<div class="a t rh" style="left:0;top:628px;width:25px;height:20px;line-height:20px">28</div>
<div class="a" style="left:0;top:666px;width:1898px;height:1px;background:#dcdcdc"></div>
<div class="a t rh" style="left:0;top:648px;width:25px;height:20px;line-height:20px">29</div>
<div class="a" style="left:0;top:686px;width:1898px;height:1px;background:#dcdcdc"></div>
<div class="a t rh" style="left:0;top:668px;width:25px;height:20px;line-height:20px">30</div>
<div class="a" style="left:0;top:706px;width:1898px;height:1px;background:#dcdcdc"></div>
<div class="a t rh" style="left:0;top:688px;width:25px;height:20px;line-height:20px">31</div>
<div class="a" style="left:0;top:726px;width:1898px;height:1px;background:#dcdcdc"></div>
<div class="a t rh" style="left:0;top:708px;width:25px;height:20px;line-height:20px">32</div>
<div class="a" style="left:0;top:746px;width:1898px;height:1px;background:#dcdcdc"></div>
<div class="a t rh" style="left:0;top:728px;width:25px;height:20px;line-height:20px">33</div>
<div class="a" style="left:0;top:766px;width:1898px;height:1px;background:#dcdcdc"></div>
<div class="a t rh" style="left:0;top:748px;width:25px;height:20px;line-height:20px">34</div>
<div class="a" style="left:0;top:786px;width:1898px;height:1px;background:#dcdcdc"></div>
<div class="a t rh" style="left:0;top:768px;width:25px;height:20px;line-height:20px">35</div>
<div class="a" style="left:0;top:806px;width:1898px;height:1px;background:#dcdcdc"></div>
<div class="a t rh" style="left:0;top:788px;width:25px;height:20px;line-height:20px">36</div>
<div class="a" style="left:860px;top:31px;width:98px;height:23px;background:#f8f8f8"></div>
<div class="a c" style="left:516px;width:400px;text-align:right;top:35px;font-size:10.67px;color:#000;transform-origin:right;transform:scaleX(0.93)">PARC GERE PAR SDI/STE)</div>
<div class="a" style="left:860px;top:119px;width:660px;height:18px;background:#f8f8f8"></div>
<div class="a c" style="left:464px;width:1000px;text-align:right;top:120px;font-size:10.67px;color:#000;transform-origin:right;transform:scaleX(1.012)">le certificat d’immatriculation soit au nom de la RATP et/ou que le véhicule dispose d’une carte TOTAL GR prise en charge par VAL/STE.</div>
<div class="a c" style="left:1202px;top:56px;width:78px;text-align:right;font-size:10.67px">01/06/2022</div>
<div class="a hd" style="left:25px;top:218px;width:80px;height:68px;background:#ACB9CA;border-left:1px solid #000;border-top:1px solid #000;">NB</div>
<div class="fb" style="left:89px;top:269px"></div>
<div class="a hd" style="left:105px;top:218px;width:80px;height:68px;background:#FFFF00;border-left:1px solid #000;border-top:1px solid #000;">Identifiant</div>
<div class="fb" style="left:169px;top:269px"></div>
<div class="a hd" style="left:185px;top:218px;width:85px;height:68px;background:#FFFF00;border-left:1px solid #000;border-top:1px solid #000;">Date de mise<br>en service</div>
<div class="fb" style="left:254px;top:269px"></div>
<div class="a hd" style="left:270px;top:218px;width:80px;height:68px;background:#ACB9CA;border-left:1px solid #000;border-top:1px solid #000;">Age</div>
<div class="fb" style="left:334px;top:269px"></div>
<div class="a hd" style="left:350px;top:218px;width:117px;height:68px;background:#FFFF00;border-left:1px solid #000;border-top:1px solid #000;">Marque</div>
<div class="fb" style="left:451px;top:269px"></div>
<div class="a hd" style="left:467px;top:218px;width:84px;height:68px;background:#FFFF00;border-left:1px solid #000;border-top:1px solid #000;">CT</div>
<div class="fb" style="left:535px;top:269px"></div>
<div class="a hd" style="left:551px;top:218px;width:84px;height:68px;background:#FFFF00;border-left:1px solid #000;border-top:1px solid #000;">Revision</div>
<div class="fb" style="left:619px;top:269px"></div>
<div class="a hd" style="left:635px;top:218px;width:84px;height:68px;background:#FFFF00;border-left:1px solid #000;border-top:1px solid #000;">PRP</div>
<div class="fb" style="left:703px;top:269px"></div>
<div class="a hd" style="left:719px;top:218px;width:80px;height:68px;background:#FFFF00;border-left:1px solid #000;border-top:1px solid #000;">Modèle</div>
<div class="fb" style="left:783px;top:269px"></div>
<div class="a hd" style="left:799px;top:218px;width:80px;height:68px;background:#FFFF00;border-left:1px solid #000;border-top:1px solid #000;">Catégorie</div>
<div class="fb" style="left:863px;top:269px"></div>
<div class="a hd" style="left:879px;top:218px;width:80px;height:68px;background:#FFFF00;border-left:1px solid #000;border-top:1px solid #000;">Energie</div>
<div class="fb" style="left:943px;top:269px"></div>
<div class="a hd" style="left:959px;top:218px;width:80px;height:68px;background:#FFFF00;border-left:1px solid #000;border-top:1px solid #000;">Département</div>
<div class="fb" style="left:1023px;top:269px"></div>
<div class="a hd" style="left:1039px;top:218px;width:163px;height:68px;background:#FFFF00;border-left:1px solid #000;border-top:1px solid #000;">Unité</div>
<div class="fb" style="left:1186px;top:269px"></div>
<div class="a hd" style="left:1202px;top:218px;width:80px;height:68px;background:#FFFF00;border-left:1px solid #000;border-top:1px solid #000;">Entité</div>
<div class="fb" style="left:1266px;top:269px"></div>
<div class="a hd" style="left:1282px;top:218px;width:80px;height:68px;background:#FFFF00;border-left:1px solid #000;border-top:1px solid #000;">Groupe</div>
<div class="fb" style="left:1346px;top:269px"></div>
<div class="a hd" style="left:1362px;top:218px;width:80px;height:68px;background:#FFFF00;border-left:1px solid #000;border-top:1px solid #000;">Activité<br>moyenne<br>mensuelle</div>
<div class="fb" style="left:1426px;top:269px"></div>
<div class="a hd" style="left:1442px;top:218px;width:80px;height:68px;background:#FFFF00;border-left:1px solid #000;border-top:1px solid #000;">Dernier<br>index<br>compteur<br>connu</div>
<div class="fb" style="left:1506px;top:269px"></div>
<div class="a hd" style="left:1522px;top:218px;width:119px;height:68px;background:#FFFF00;border-left:1px solid #000;border-top:1px solid #000;">Date dernier index<br>connu</div>
<div class="fb" style="left:1625px;top:269px"></div>
<div class="a hd" style="left:1641px;top:218px;width:80px;height:68px;background:#00B0F0;border-left:1px solid #000;border-top:1px solid #000;">Activité<br>moyenne<br>mensuelle<br>recalculé</div>
<div class="fb" style="left:1705px;top:269px"></div>
<div class="a hd" style="left:1721px;top:218px;width:80px;height:68px;background:#00FFFF;border-left:1px solid #000;border-top:1px solid #000;">Famille</div>
<div class="fb" style="left:1785px;top:269px"></div>
<div class="a hd" style="left:1801px;top:218px;width:81px;height:68px;background:#00FFFF;border-left:1px solid #000;border-top:1px solid #000;">Sous-famille</div>
<div class="fb" style="left:1866px;top:269px"></div>
<div class="a hd" style="left:1882px;top:218px;width:80px;height:68px;background:#00FFFF;border-left:1px solid #000;border-top:1px solid #000;justify-content:flex-start;padding-left:2px;">Mo</div>
<div class="fb" style="left:1946px;top:269px"></div>
<div class="a" style="left:0px;top:286px;width:1898px;height:1px;background:#a6a6a6"></div>
<div class="a" style="left:1282px;top:347px;width:1px;height:19px;background:#f8f8f8"></div>
<div class="a" style="left:1282px;top:787px;width:1px;height:19px;background:#f8f8f8"></div>
<div class="a" style="left:25px;top:287px;width:1873px;height:20px;background:#ED7D31"></div>
<div class="a c" style="left:-297px;top:287.5px;width:400px;text-align:right;transform-origin:right;transform:scaleX(0.9682)">1</div>
<div class="a c" style="left:108px;top:287.5px;transform-origin:left;transform:scaleX(0.8966)">GF-622-JS</div>
<div class="a c" style="left:-132px;top:287.5px;width:400px;text-align:right;transform-origin:right;transform:scaleX(1.0451)">23/03/2022</div>
<div class="a c" style="left:-52px;top:287.5px;width:400px;text-align:right;transform-origin:right;transform:scaleX(0.9881)">0,10</div>
<div class="a c" style="left:353px;top:287.5px;transform-origin:left;transform:scaleX(0.8967)">PEUGEOT</div>
<div class="a c" style="left:149px;top:287.5px;width:400px;text-align:right;transform-origin:right;transform:scaleX(1.0451)">31/05/2022</div>
<div class="a c" style="left:397px;top:287.5px;width:400px;text-align:right;transform-origin:right;transform:scaleX(0.9682)">308</div>
<div class="a c" style="left:802px;top:287.5px;transform-origin:left;transform:scaleX(0.9226)">VP</div>
<div class="a c" style="left:882px;top:287.5px;transform-origin:left;transform:scaleX(0.8369)">ESSENCE</div>
<div class="a c" style="left:962px;top:287.5px;transform-origin:left;transform:scaleX(0.8931)">GIS</div>
<div class="a c" style="left:1042px;top:287.5px;transform-origin:left;transform:scaleX(0.9380)">DIR</div>
<div class="a c" style="left:1040px;top:287.5px;width:400px;text-align:right;transform-origin:right;transform:scaleX(0.9682)">2</div>
<div class="a c" style="left:1120px;top:287.5px;width:400px;text-align:right;transform-origin:right;transform:scaleX(0.9682)">1</div>
<div class="a c" style="left:1239px;top:287.5px;width:400px;text-align:right;transform-origin:right;transform:scaleX(1.0177)">23/03/2022 00:00</div>
<div class="a c" style="left:1319px;top:287.5px;width:400px;text-align:right;transform-origin:right;transform:scaleX(0.9682)">1</div>
<div class="a c" style="left:1724px;top:287.5px;transform-origin:left;transform:scaleX(0.9232)">FONC</div>
<div class="a c" style="left:1804px;top:287.5px;transform-origin:left;transform:scaleX(0.9587)">DD</div>
<div class="a c" style="left:1885px;top:287.5px;transform-origin:left;transform:scaleX(0.9960)">1.2</div>
<div class="a" style="left:25px;top:306px;width:1873px;height:21px;background:#00B050"></div>
<div class="a c" style="left:-297px;top:307.5px;width:400px;text-align:right;transform-origin:right;transform:scaleX(0.9682)">1</div>
<div class="a c" style="left:108px;top:307.5px;transform-origin:left;transform:scaleX(0.9177)">GE-628-VP</div>
<div class="a c" style="left:-132px;top:307.5px;width:400px;text-align:right;transform-origin:right;transform:scaleX(1.0451)">22/02/2022</div>
<div class="a c" style="left:-52px;top:307.5px;width:400px;text-align:right;transform-origin:right;transform:scaleX(0.9881)">0,18</div>
<div class="a c" style="left:353px;top:307.5px;transform-origin:left;transform:scaleX(0.8902)">CITR</div>
<div class="a c" style="left:149px;top:307.5px;width:400px;text-align:right;transform-origin:right;transform:scaleX(1.0451)">31/05/2025</div>
<div class="a c" style="left:722px;top:307.5px;transform-origin:left;transform:scaleX(0.9545)">C3 3èmeG</div>
<div class="a c" style="left:802px;top:307.5px;transform-origin:left;transform:scaleX(0.9414)">VU</div>
<div class="a c" style="left:882px;top:307.5px;transform-origin:left;transform:scaleX(0.8369)">ESSENCE</div>
<div class="a c" style="left:962px;top:307.5px;transform-origin:left;transform:scaleX(0.8744)">SUR</div>
<div class="a c" style="left:1042px;top:307.5px;transform-origin:left;transform:scaleX(0.9693)">SRM</div>
<div class="a c" style="left:1205px;top:307.5px;transform-origin:left;transform:scaleX(0.9448)">KHBOB</div>
<div class="a c" style="left:1040px;top:307.5px;width:400px;text-align:right;transform-origin:right;transform:scaleX(0.9682)">4</div>
<div class="a c" style="left:1120px;top:307.5px;width:400px;text-align:right;transform-origin:right;transform:scaleX(0.9682)">6</div>
<div class="a c" style="left:1239px;top:307.5px;width:400px;text-align:right;transform-origin:right;transform:scaleX(1.0177)">07/04/2022 14:43</div>
<div class="a c" style="left:1319px;top:307.5px;width:400px;text-align:right;transform-origin:right;transform:scaleX(0.9682)">3</div>
<div class="a c" style="left:1724px;top:307.5px;transform-origin:left;transform:scaleX(0.8230)">SER</div>
<div class="a c" style="left:1885px;top:307.5px;transform-origin:left;transform:scaleX(0.9960)">1.2</div>
<div class="a c" style="left:-297px;top:327.5px;width:400px;text-align:right;transform-origin:right;transform:scaleX(0.9682)">1</div>
<div class="a c" style="left:108px;top:327.5px;transform-origin:left;transform:scaleX(0.9177)">GE-591-VP</div>
<div class="a c" style="left:-132px;top:327.5px;width:400px;text-align:right;transform-origin:right;transform:scaleX(1.0451)">22/02/2022</div>
<div class="a c" style="left:-52px;top:327.5px;width:400px;text-align:right;transform-origin:right;transform:scaleX(0.9881)">0,18</div>
<div class="a c" style="left:353px;top:327.5px;transform-origin:left;transform:scaleX(0.8902)">CITR</div>
<div class="a c" style="left:722px;top:327.5px;transform-origin:left;transform:scaleX(0.9545)">C3 3èmeG</div>
<div class="a c" style="left:802px;top:327.5px;transform-origin:left;transform:scaleX(0.9414)">VU</div>
<div class="a c" style="left:882px;top:327.5px;transform-origin:left;transform:scaleX(0.8369)">ESSENCE</div>
<div class="a c" style="left:962px;top:327.5px;transform-origin:left;transform:scaleX(0.8744)">SUR</div>
<div class="a c" style="left:1042px;top:327.5px;transform-origin:left;transform:scaleX(0.9693)">SRM</div>
<div class="a c" style="left:1205px;top:327.5px;transform-origin:left;transform:scaleX(0.9322)">KHPA</div>
<div class="a c" style="left:1040px;top:327.5px;width:400px;text-align:right;transform-origin:right;transform:scaleX(0.9682)">29</div>
<div class="a c" style="left:1120px;top:327.5px;width:400px;text-align:right;transform-origin:right;transform:scaleX(0.9682)">43</div>
<div class="a c" style="left:1239px;top:327.5px;width:400px;text-align:right;transform-origin:right;transform:scaleX(1.0177)">05/04/2022 13:44</div>
<div class="a c" style="left:1319px;top:327.5px;width:400px;text-align:right;transform-origin:right;transform:scaleX(0.9682)">20</div>
<div class="a c" style="left:1724px;top:327.5px;transform-origin:left;transform:scaleX(0.8230)">SER</div>
<div class="a c" style="left:1885px;top:327.5px;transform-origin:left;transform:scaleX(0.9960)">1.2</div>
<div class="a c" style="left:-297px;top:347.5px;width:400px;text-align:right;transform-origin:right;transform:scaleX(0.9682)">1</div>
<div class="a c" style="left:108px;top:347.5px;transform-origin:left;transform:scaleX(0.9177)">GE-526-VP</div>
<div class="a c" style="left:-132px;top:347.5px;width:400px;text-align:right;transform-origin:right;transform:scaleX(1.0451)">22/02/2022</div>
<div class="a c" style="left:-52px;top:347.5px;width:400px;text-align:right;transform-origin:right;transform:scaleX(0.9881)">0,18</div>
<div class="a c" style="left:353px;top:347.5px;transform-origin:left;transform:scaleX(0.8902)">CITR</div>
<div class="a c" style="left:722px;top:347.5px;transform-origin:left;transform:scaleX(0.9545)">C3 3èmeG</div>
<div class="a c" style="left:802px;top:347.5px;transform-origin:left;transform:scaleX(0.9414)">VU</div>
<div class="a c" style="left:882px;top:347.5px;transform-origin:left;transform:scaleX(0.8369)">ESSENCE</div>
<div class="a c" style="left:962px;top:347.5px;transform-origin:left;transform:scaleX(0.8744)">SUR</div>
<div class="a c" style="left:1042px;top:347.5px;transform-origin:left;transform:scaleX(0.9380)">DIR</div>
<div class="a c" style="left:1205px;top:347.5px;transform-origin:left;transform:scaleX(0.8982)">DUO RESEAUX</div>
<div class="a c" style="left:1040px;top:347.5px;width:400px;text-align:right;transform-origin:right;transform:scaleX(0.9682)">3</div>
<div class="a c" style="left:1120px;top:347.5px;width:400px;text-align:right;transform-origin:right;transform:scaleX(0.9682)">5</div>
<div class="a c" style="left:1239px;top:347.5px;width:400px;text-align:right;transform-origin:right;transform:scaleX(1.0177)">07/04/2022 15:59</div>
<div class="a c" style="left:1319px;top:347.5px;width:400px;text-align:right;transform-origin:right;transform:scaleX(0.9682)">2</div>
<div class="a c" style="left:1724px;top:347.5px;transform-origin:left;transform:scaleX(0.8230)">SER</div>
<div class="a c" style="left:1885px;top:347.5px;transform-origin:left;transform:scaleX(0.9960)">1.2</div>
<div class="a c" style="left:-297px;top:367.5px;width:400px;text-align:right;transform-origin:right;transform:scaleX(0.9682)">1</div>
<div class="a c" style="left:108px;top:367.5px;transform-origin:left;transform:scaleX(0.9228)">GE-123-DB</div>
<div class="a c" style="left:-132px;top:367.5px;width:400px;text-align:right;transform-origin:right;transform:scaleX(1.0451)">14/01/2022</div>
<div class="a c" style="left:-52px;top:367.5px;width:400px;text-align:right;transform-origin:right;transform:scaleX(0.9881)">0,29</div>
<div class="a c" style="left:353px;top:367.5px;transform-origin:left;transform:scaleX(0.8967)">PEUGEOT</div>
<div class="a c" style="left:722px;top:367.5px;transform-origin:left;transform:scaleX(0.9130)">PEUG BOX</div>
<div class="a c" style="left:802px;top:367.5px;transform-origin:left;transform:scaleX(0.9414)">VU</div>
<div class="a c" style="left:882px;top:367.5px;transform-origin:left;transform:scaleX(0.9395)">GO</div>
<div class="a c" style="left:962px;top:367.5px;transform-origin:left;transform:scaleX(0.9058)">RATP INFRA</div>
<div class="a c" style="left:1042px;top:367.5px;transform-origin:left;transform:scaleX(0.9783)">TDE/MCBT</div>
<div class="a c" style="left:1205px;top:367.5px;transform-origin:left;transform:scaleX(0.9325)">NANT</div>
<div class="a c" style="left:1040px;top:367.5px;width:400px;text-align:right;transform-origin:right;transform:scaleX(0.9682)">32</div>
<div class="a c" style="left:1120px;top:367.5px;width:400px;text-align:right;transform-origin:right;transform:scaleX(0.9682)">85</div>
<div class="a c" style="left:1239px;top:367.5px;width:400px;text-align:right;transform-origin:right;transform:scaleX(1.0177)">04/04/2022 08:00</div>
<div class="a c" style="left:1319px;top:367.5px;width:400px;text-align:right;transform-origin:right;transform:scaleX(0.9682)">24</div>
<div class="a c" style="left:1724px;top:367.5px;transform-origin:left;transform:scaleX(0.8230)">SER</div>
<div class="a c" style="left:1885px;top:367.5px;transform-origin:left;transform:scaleX(0.9960)">2.0</div>
<div class="a c" style="left:-297px;top:387.5px;width:400px;text-align:right;transform-origin:right;transform:scaleX(0.9682)">1</div>
<div class="a c" style="left:108px;top:387.5px;transform-origin:left;transform:scaleX(0.8974)">GE-119-JG</div>
<div class="a c" style="left:-132px;top:387.5px;width:400px;text-align:right;transform-origin:right;transform:scaleX(1.0451)">27/01/2022</div>
<div class="a c" style="left:-52px;top:387.5px;width:400px;text-align:right;transform-origin:right;transform:scaleX(0.9881)">0,25</div>
<div class="a c" style="left:353px;top:387.5px;transform-origin:left;transform:scaleX(0.8967)">PEUGEOT</div>
<div class="a c" style="left:722px;top:387.5px;transform-origin:left;transform:scaleX(0.9225)">PEUG 2008</div>
<div class="a c" style="left:802px;top:387.5px;transform-origin:left;transform:scaleX(0.9226)">VP</div>
<div class="a c" style="left:882px;top:387.5px;transform-origin:left;transform:scaleX(0.8369)">ESSENCE</div>
<div class="a c" style="left:962px;top:387.5px;transform-origin:left;transform:scaleX(0.8744)">SUR</div>
<div class="a c" style="left:1042px;top:387.5px;transform-origin:left;transform:scaleX(0.9380)">DIR</div>
<div class="a c" style="left:1040px;top:387.5px;width:400px;text-align:right;transform-origin:right;transform:scaleX(0.9682)">751</div>
<div class="a c" style="left:1120px;top:387.5px;width:400px;text-align:right;transform-origin:right;transform:scaleX(0.9682)">1620</div>
<div class="a c" style="left:1239px;top:387.5px;width:400px;text-align:right;transform-origin:right;transform:scaleX(1.0177)">01/04/2022 16:33</div>
<div class="a c" style="left:1319px;top:387.5px;width:400px;text-align:right;transform-origin:right;transform:scaleX(0.9682)">530</div>
<div class="a c" style="left:1724px;top:387.5px;transform-origin:left;transform:scaleX(0.9232)">FONC</div>
<div class="a c" style="left:1804px;top:387.5px;transform-origin:left;transform:scaleX(0.9587)">DD</div>
<div class="a c" style="left:1885px;top:387.5px;transform-origin:left;transform:scaleX(0.9960)">1.2</div>
<div class="a" style="left:25px;top:406px;width:1873px;height:21px;background:#00B050"></div>
<div class="a c" style="left:-297px;top:407.5px;width:400px;text-align:right;transform-origin:right;transform:scaleX(0.9682)">1</div>
<div class="a c" style="left:108px;top:407.5px;transform-origin:left;transform:scaleX(0.9229)">GD-781-GR</div>
<div class="a c" style="left:-132px;top:407.5px;width:400px;text-align:right;transform-origin:right;transform:scaleX(1.0451)">30/11/2021</div>
<div class="a c" style="left:-52px;top:407.5px;width:400px;text-align:right;transform-origin:right;transform:scaleX(0.9881)">0,41</div>
<div class="a c" style="left:353px;top:407.5px;transform-origin:left;transform:scaleX(0.8967)">PEUGEOT</div>
<div class="a c" style="left:309.0px;top:407.5px;width:400px;text-align:center;transform:scaleX(1.0451)">27/11/2025</div>
<div class="a c" style="left:393.0px;top:407.5px;width:400px;text-align:center;transform:scaleX(1.0451)">29/11/2023</div>
<div class="a c" style="left:722px;top:407.5px;transform-origin:left;transform:scaleX(0.9130)">PEUG BOX</div>
<div class="a c" style="left:802px;top:407.5px;transform-origin:left;transform:scaleX(0.9414)">VU</div>
<div class="a c" style="left:882px;top:407.5px;transform-origin:left;transform:scaleX(0.9395)">GO</div>
<div class="a c" style="left:962px;top:407.5px;transform-origin:left;transform:scaleX(1.0101)">M2E</div>
<div class="a" style="left:1039px;top:407.5px;width:163px;height:20px;overflow:hidden"><div class="a c" style="left:3px;top:0;transform-origin:left;transform:scaleX(1.0614)">Maintenance patrimoniale</div></div>
<div class="a c" style="left:1205px;top:407.5px;transform-origin:left;transform:scaleX(0.8860)">SDAC</div>
<div class="a c" style="left:1285px;top:407.5px;transform-origin:left;transform:scaleX(1.0256)">EM</div>
<div class="a c" style="left:1040px;top:407.5px;width:400px;text-align:right;transform-origin:right;transform:scaleX(0.9682)">20</div>
<div class="a c" style="left:1120px;top:407.5px;width:400px;text-align:right;transform-origin:right;transform:scaleX(0.9682)">65</div>
<div class="a c" style="left:1239px;top:407.5px;width:400px;text-align:right;transform-origin:right;transform:scaleX(1.0177)">01/02/2022 08:00</div>
<div class="a c" style="left:1319px;top:407.5px;width:400px;text-align:right;transform-origin:right;transform:scaleX(0.9682)">13</div>
<div class="a c" style="left:1724px;top:407.5px;transform-origin:left;transform:scaleX(0.8230)">SER</div>
<div class="a c" style="left:1885px;top:407.5px;transform-origin:left;transform:scaleX(0.9960)">2.0</div>
<div class="a c" style="left:-297px;top:427.5px;width:400px;text-align:right;transform-origin:right;transform:scaleX(0.9682)">1</div>
<div class="a c" style="left:108px;top:427.5px;transform-origin:left;transform:scaleX(0.9229)">GD-752-GR</div>
<div class="a c" style="left:-132px;top:427.5px;width:400px;text-align:right;transform-origin:right;transform:scaleX(1.0451)">30/11/2021</div>
<div class="a c" style="left:-52px;top:427.5px;width:400px;text-align:right;transform-origin:right;transform:scaleX(0.9881)">0,41</div>
<div class="a c" style="left:353px;top:427.5px;transform-origin:left;transform:scaleX(0.8967)">PEUGEOT</div>
<div class="a c" style="left:722px;top:427.5px;transform-origin:left;transform:scaleX(0.8925)">PEUG EXP 4</div>
<div class="a c" style="left:802px;top:427.5px;transform-origin:left;transform:scaleX(0.9414)">VU</div>
<div class="a c" style="left:882px;top:427.5px;transform-origin:left;transform:scaleX(0.9395)">GO</div>
<div class="a c" style="left:962px;top:427.5px;transform-origin:left;transform:scaleX(0.9058)">RATP INFRA</div>
<div class="a c" style="left:1042px;top:427.5px;transform-origin:left;transform:scaleX(0.8656)">CT</div>
<div class="a c" style="left:1205px;top:427.5px;transform-origin:left;transform:scaleX(0.9920)">ESMCM</div>
<div class="a c" style="left:1285px;top:427.5px;transform-origin:left;transform:scaleX(1.0387)">MC</div>
<div class="a c" style="left:1040px;top:427.5px;width:400px;text-align:right;transform-origin:right;transform:scaleX(0.9682)">2</div>
<div class="a c" style="left:1120px;top:427.5px;width:400px;text-align:right;transform-origin:right;transform:scaleX(0.9682)">7</div>
<div class="a c" style="left:1239px;top:427.5px;width:400px;text-align:right;transform-origin:right;transform:scaleX(1.0177)">05/04/2022 08:00</div>
<div class="a c" style="left:1319px;top:427.5px;width:400px;text-align:right;transform-origin:right;transform:scaleX(0.9682)">1</div>
<div class="a c" style="left:1724px;top:427.5px;transform-origin:left;transform:scaleX(0.8230)">SER</div>
<div class="a c" style="left:1885px;top:427.5px;transform-origin:left;transform:scaleX(0.9960)">1.6</div>
<div class="a" style="left:25px;top:446px;width:1873px;height:21px;background:#00B050"></div>
<div class="a c" style="left:-297px;top:447.5px;width:400px;text-align:right;transform-origin:right;transform:scaleX(0.9682)">1</div>
<div class="a c" style="left:108px;top:447.5px;transform-origin:left;transform:scaleX(0.9229)">GD-718-GR</div>
<div class="a c" style="left:-132px;top:447.5px;width:400px;text-align:right;transform-origin:right;transform:scaleX(1.0451)">30/11/2021</div>
<div class="a c" style="left:-52px;top:447.5px;width:400px;text-align:right;transform-origin:right;transform:scaleX(0.9881)">0,41</div>
<div class="a c" style="left:353px;top:447.5px;transform-origin:left;transform:scaleX(0.8902)">CITR</div>
<div class="a c" style="left:309.0px;top:447.5px;width:400px;text-align:center;transform:scaleX(1.0451)">27/11/2025</div>
<div class="a c" style="left:393.0px;top:447.5px;width:400px;text-align:center;transform:scaleX(1.0451)">29/11/2023</div>
<div class="a c" style="left:722px;top:447.5px;transform-origin:left;transform:scaleX(0.8653)">CITR JPY</div>
<div class="a c" style="left:802px;top:447.5px;transform-origin:left;transform:scaleX(0.9414)">VU</div>
<div class="a c" style="left:882px;top:447.5px;transform-origin:left;transform:scaleX(0.9395)">GO</div>
<div class="a c" style="left:962px;top:447.5px;transform-origin:left;transform:scaleX(1.0101)">M2E</div>
<div class="a c" style="left:1042px;top:447.5px;transform-origin:left;transform:scaleX(1.0572)">Maintenance courante</div>
<div class="a c" style="left:1205px;top:447.5px;transform-origin:left;transform:scaleX(0.9345)">TAP-EEM</div>
<div class="a c" style="left:1285px;top:447.5px;transform-origin:left;transform:scaleX(0.9278)">CHZY CLIM</div>
<div class="a c" style="left:1040px;top:447.5px;width:400px;text-align:right;transform-origin:right;transform:scaleX(0.9682)">2028</div>
<div class="a c" style="left:1120px;top:447.5px;width:400px;text-align:right;transform-origin:right;transform:scaleX(0.9682)">9119</div>
<div class="a c" style="left:1239px;top:447.5px;width:400px;text-align:right;transform-origin:right;transform:scaleX(1.0177)">13/04/2022 21:00</div>
<div class="a c" style="left:1319px;top:447.5px;width:400px;text-align:right;transform-origin:right;transform:scaleX(0.9682)">1837</div>
<div class="a c" style="left:1724px;top:447.5px;transform-origin:left;transform:scaleX(0.8230)">SER</div>
<div class="a c" style="left:1804px;top:447.5px;transform-origin:left;transform:scaleX(0.9097)">TAP</div>
<div class="a c" style="left:1885px;top:447.5px;transform-origin:left;transform:scaleX(0.9960)">2.0</div>
<div class="a c" style="left:-297px;top:467.5px;width:400px;text-align:right;transform-origin:right;transform:scaleX(0.9682)">1</div>
<div class="a c" style="left:108px;top:467.5px;transform-origin:left;transform:scaleX(0.9229)">GD-687-GR</div>
<div class="a c" style="left:-132px;top:467.5px;width:400px;text-align:right;transform-origin:right;transform:scaleX(1.0451)">30/11/2021</div>
<div class="a c" style="left:-52px;top:467.5px;width:400px;text-align:right;transform-origin:right;transform:scaleX(0.9881)">0,41</div>
<div class="a c" style="left:353px;top:467.5px;transform-origin:left;transform:scaleX(0.8967)">PEUGEOT</div>
<div class="a c" style="left:722px;top:467.5px;transform-origin:left;transform:scaleX(0.8925)">PEUG EXP 4</div>
<div class="a c" style="left:802px;top:467.5px;transform-origin:left;transform:scaleX(0.9414)">VU</div>
<div class="a c" style="left:882px;top:467.5px;transform-origin:left;transform:scaleX(0.9395)">GO</div>
<div class="a c" style="left:962px;top:467.5px;transform-origin:left;transform:scaleX(0.9058)">RATP INFRA</div>
<div class="a c" style="left:1042px;top:467.5px;transform-origin:left;transform:scaleX(0.9335)">VOIE</div>
<div class="a c" style="left:1205px;top:467.5px;transform-origin:left;transform:scaleX(0.9839)">MET</div>
<div class="a c" style="left:1285px;top:467.5px;transform-origin:left;transform:scaleX(1.0452)">MTW2</div>
<div class="a c" style="left:1040px;top:467.5px;width:400px;text-align:right;transform-origin:right;transform:scaleX(0.9682)">19</div>
<div class="a c" style="left:1120px;top:467.5px;width:400px;text-align:right;transform-origin:right;transform:scaleX(0.9682)">78</div>
<div class="a c" style="left:1239px;top:467.5px;width:400px;text-align:right;transform-origin:right;transform:scaleX(1.0177)">11/03/2022 08:00</div>
<div class="a c" style="left:1319px;top:467.5px;width:400px;text-align:right;transform-origin:right;transform:scaleX(0.9682)">16</div>
<div class="a c" style="left:1724px;top:467.5px;transform-origin:left;transform:scaleX(0.8230)">SER</div>
<div class="a c" style="left:1885px;top:467.5px;transform-origin:left;transform:scaleX(0.9960)">1.6</div>
<div class="a c" style="left:-297px;top:487.5px;width:400px;text-align:right;transform-origin:right;transform:scaleX(0.9682)">1</div>
<div class="a c" style="left:108px;top:487.5px;transform-origin:left;transform:scaleX(0.9277)">GD-545-CX</div>
<div class="a c" style="left:-132px;top:487.5px;width:400px;text-align:right;transform-origin:right;transform:scaleX(1.0451)">24/11/2021</div>
<div class="a c" style="left:-52px;top:487.5px;width:400px;text-align:right;transform-origin:right;transform:scaleX(0.9881)">0,43</div>
<div class="a c" style="left:353px;top:487.5px;transform-origin:left;transform:scaleX(0.8967)">PEUGEOT</div>
<div class="a c" style="left:722px;top:487.5px;transform-origin:left;transform:scaleX(0.8925)">PEUG EXP 4</div>
<div class="a c" style="left:802px;top:487.5px;transform-origin:left;transform:scaleX(0.9414)">VU</div>
<div class="a c" style="left:882px;top:487.5px;transform-origin:left;transform:scaleX(0.9395)">GO</div>
<div class="a c" style="left:962px;top:487.5px;transform-origin:left;transform:scaleX(0.9058)">RATP INFRA</div>
<div class="a c" style="left:1042px;top:487.5px;transform-origin:left;transform:scaleX(0.8742)">ESO</div>
<div class="a c" style="left:1205px;top:487.5px;transform-origin:left;transform:scaleX(0.8722)">BARBES</div>
<div class="a c" style="left:1040px;top:487.5px;width:400px;text-align:right;transform-origin:right;transform:scaleX(0.9682)">593</div>
<div class="a c" style="left:1120px;top:487.5px;width:400px;text-align:right;transform-origin:right;transform:scaleX(0.9682)">2787</div>
<div class="a c" style="left:1239px;top:487.5px;width:400px;text-align:right;transform-origin:right;transform:scaleX(1.0177)">14/04/2022 00:36</div>
<div class="a c" style="left:1319px;top:487.5px;width:400px;text-align:right;transform-origin:right;transform:scaleX(0.9682)">540</div>
<div class="a c" style="left:1724px;top:487.5px;transform-origin:left;transform:scaleX(0.8230)">SER</div>
<div class="a c" style="left:1885px;top:487.5px;transform-origin:left;transform:scaleX(0.9960)">1.6</div>
<div class="a" style="left:25px;top:506px;width:1873px;height:21px;background:#00B050"></div>
<div class="a c" style="left:-297px;top:507.5px;width:400px;text-align:right;transform-origin:right;transform:scaleX(0.9682)">1</div>
<div class="a c" style="left:108px;top:507.5px;transform-origin:left;transform:scaleX(0.9277)">GD-541-CX</div>
<div class="a c" style="left:-132px;top:507.5px;width:400px;text-align:right;transform-origin:right;transform:scaleX(1.0451)">24/11/2021</div>
<div class="a c" style="left:-52px;top:507.5px;width:400px;text-align:right;transform-origin:right;transform:scaleX(0.9881)">0,43</div>
<div class="a c" style="left:353px;top:507.5px;transform-origin:left;transform:scaleX(0.8967)">PEUGEOT</div>
<div class="a c" style="left:309.0px;top:507.5px;width:400px;text-align:center;transform:scaleX(1.0451)">21/11/2025</div>
<div class="a c" style="left:393.0px;top:507.5px;width:400px;text-align:center;transform:scaleX(1.0451)">23/11/2023</div>
<div class="a c" style="left:722px;top:507.5px;transform-origin:left;transform:scaleX(0.8925)">PEUG EXP 4</div>
<div class="a c" style="left:802px;top:507.5px;transform-origin:left;transform:scaleX(0.9414)">VU</div>
<div class="a c" style="left:882px;top:507.5px;transform-origin:left;transform:scaleX(0.9395)">GO</div>
<div class="a c" style="left:962px;top:507.5px;transform-origin:left;transform:scaleX(1.0101)">M2E</div>
<div class="a c" style="left:1042px;top:507.5px;transform-origin:left;transform:scaleX(1.0572)">Maintenance courante</div>
<div class="a c" style="left:1205px;top:507.5px;transform-origin:left;transform:scaleX(0.8979)">BNE</div>
<div class="a c" style="left:1285px;top:507.5px;transform-origin:left;transform:scaleX(0.8760)">CHZY</div>
<div class="a c" style="left:1040px;top:507.5px;width:400px;text-align:right;transform-origin:right;transform:scaleX(0.9682)">195</div>
<div class="a c" style="left:1120px;top:507.5px;width:400px;text-align:right;transform-origin:right;transform:scaleX(0.9682)">822</div>
<div class="a c" style="left:1239px;top:507.5px;width:400px;text-align:right;transform-origin:right;transform:scaleX(1.0177)">30/03/2022 09:31</div>
<div class="a c" style="left:1319px;top:507.5px;width:400px;text-align:right;transform-origin:right;transform:scaleX(0.9682)">159</div>
<div class="a c" style="left:1724px;top:507.5px;transform-origin:left;transform:scaleX(0.8230)">SER</div>
<div class="a c" style="left:1885px;top:507.5px;transform-origin:left;transform:scaleX(0.9960)">1.6</div>
<div class="a c" style="left:-297px;top:527.5px;width:400px;text-align:right;transform-origin:right;transform:scaleX(0.9682)">1</div>
<div class="a c" style="left:108px;top:527.5px;transform-origin:left;transform:scaleX(0.9376)">GD-376-LQ</div>
<div class="a c" style="left:-132px;top:527.5px;width:400px;text-align:right;transform-origin:right;transform:scaleX(1.0451)">09/12/2021</div>
<div class="a c" style="left:-52px;top:527.5px;width:400px;text-align:right;transform-origin:right;transform:scaleX(0.9881)">0,39</div>
<div class="a c" style="left:353px;top:527.5px;transform-origin:left;transform:scaleX(0.8967)">PEUGEOT</div>
<div class="a c" style="left:722px;top:527.5px;transform-origin:left;transform:scaleX(0.9130)">PEUG BOX</div>
<div class="a c" style="left:802px;top:527.5px;transform-origin:left;transform:scaleX(0.9414)">VU</div>
<div class="a c" style="left:882px;top:527.5px;transform-origin:left;transform:scaleX(0.9395)">GO</div>
<div class="a c" style="left:962px;top:527.5px;transform-origin:left;transform:scaleX(1.0101)">M2E</div>
<div class="a c" style="left:1042px;top:527.5px;transform-origin:left;transform:scaleX(1.0572)">Maintenance courante</div>
<div class="a c" style="left:1205px;top:527.5px;transform-origin:left;transform:scaleX(0.9584)">EEM</div>
<div class="a c" style="left:1285px;top:527.5px;transform-origin:left;transform:scaleX(0.8959)">CHNS</div>
<div class="a c" style="left:1040px;top:527.5px;width:400px;text-align:right;transform-origin:right;transform:scaleX(0.9682)">30</div>
<div class="a c" style="left:1120px;top:527.5px;width:400px;text-align:right;transform-origin:right;transform:scaleX(0.9682)">93</div>
<div class="a c" style="left:1239px;top:527.5px;width:400px;text-align:right;transform-origin:right;transform:scaleX(1.0177)">11/03/2022 09:50</div>
<div class="a c" style="left:1319px;top:527.5px;width:400px;text-align:right;transform-origin:right;transform:scaleX(0.9682)">20</div>
<div class="a c" style="left:1724px;top:527.5px;transform-origin:left;transform:scaleX(0.8230)">SER</div>
<div class="a c" style="left:1885px;top:527.5px;transform-origin:left;transform:scaleX(0.9960)">2.0</div>
<div class="a" style="left:25px;top:546px;width:1873px;height:21px;background:#00B050"></div>
<div class="a c" style="left:-297px;top:547.5px;width:400px;text-align:right;transform-origin:right;transform:scaleX(0.9682)">1</div>
<div class="a c" style="left:108px;top:547.5px;transform-origin:left;transform:scaleX(0.9228)">GC-941-KA</div>
<div class="a c" style="left:-132px;top:547.5px;width:400px;text-align:right;transform-origin:right;transform:scaleX(1.0451)">14/10/2021</div>
<div class="a c" style="left:-52px;top:547.5px;width:400px;text-align:right;transform-origin:right;transform:scaleX(0.9881)">0,54</div>
<div class="a c" style="left:353px;top:547.5px;transform-origin:left;transform:scaleX(0.8967)">PEUGEOT</div>
<div class="a c" style="left:309.0px;top:547.5px;width:400px;text-align:center;transform:scaleX(1.0451)">13/10/2025</div>
<div class="a c" style="left:393.0px;top:547.5px;width:400px;text-align:center;transform:scaleX(1.0451)">21/10/2022</div>
<div class="a c" style="left:722px;top:547.5px;transform-origin:left;transform:scaleX(0.8931)">PEUG PAR</div>
<div class="a c" style="left:802px;top:547.5px;transform-origin:left;transform:scaleX(0.9414)">VU</div>
<div class="a c" style="left:882px;top:547.5px;transform-origin:left;transform:scaleX(0.9395)">GO</div>
<div class="a c" style="left:962px;top:547.5px;transform-origin:left;transform:scaleX(0.8744)">RDS</div>
<div class="a c" style="left:1042px;top:547.5px;transform-origin:left;transform:scaleX(0.9015)">CRIV</div>
<div class="a c" style="left:1040px;top:547.5px;width:400px;text-align:right;transform-origin:right;transform:scaleX(0.9682)">3887</div>
<div class="a c" style="left:1120px;top:547.5px;width:400px;text-align:right;transform-origin:right;transform:scaleX(0.9682)">9289</div>
<div class="a c" style="left:1239px;top:547.5px;width:400px;text-align:right;transform-origin:right;transform:scaleX(1.0177)">12/04/2022 05:04</div>
<div class="a c" style="left:1319px;top:547.5px;width:400px;text-align:right;transform-origin:right;transform:scaleX(0.9682)">1427</div>
<div class="a c" style="left:1724px;top:547.5px;transform-origin:left;transform:scaleX(0.8230)">SER</div>
<div class="a c" style="left:1885px;top:547.5px;transform-origin:left;transform:scaleX(0.9960)">1.6</div>
<div class="a c" style="left:-297px;top:567.5px;width:400px;text-align:right;transform-origin:right;transform:scaleX(0.9682)">1</div>
<div class="a c" style="left:108px;top:567.5px;transform-origin:left;transform:scaleX(0.9074)">GC-940-JA</div>
<div class="a c" style="left:-132px;top:567.5px;width:400px;text-align:right;transform-origin:right;transform:scaleX(1.0451)">13/10/2021</div>
<div class="a c" style="left:-52px;top:567.5px;width:400px;text-align:right;transform-origin:right;transform:scaleX(0.9881)">0,55</div>
<div class="a c" style="left:353px;top:567.5px;transform-origin:left;transform:scaleX(0.8833)">RENAULT TRUCKS</div>
<div class="a c" style="left:722px;top:567.5px;transform-origin:left;transform:scaleX(0.9516)">D26 WIDE P6</div>
<div class="a c" style="left:802px;top:567.5px;transform-origin:left;transform:scaleX(0.8805)">PL</div>
<div class="a c" style="left:882px;top:567.5px;transform-origin:left;transform:scaleX(0.9229)">GNV</div>
<div class="a c" style="left:962px;top:567.5px;transform-origin:left;transform:scaleX(0.9229)">DPG</div>
<div class="a c" style="left:1042px;top:567.5px;transform-origin:left;transform:scaleX(0.8958)">LDT</div>
<div class="a c" style="left:1205px;top:567.5px;transform-origin:left;transform:scaleX(0.8981)">TRANSPORT</div>
<div class="a c" style="left:1285px;top:567.5px;transform-origin:left;transform:scaleX(0.8883)">BOISSY</div>
<div class="a c" style="left:1040px;top:567.5px;width:400px;text-align:right;transform-origin:right;transform:scaleX(0.9682)">19</div>
<div class="a c" style="left:1120px;top:567.5px;width:400px;text-align:right;transform-origin:right;transform:scaleX(0.9682)">108</div>
<div class="a c" style="left:1239px;top:567.5px;width:400px;text-align:right;transform-origin:right;transform:scaleX(1.0177)">28/01/2022 10:39</div>
<div class="a c" style="left:1319px;top:567.5px;width:400px;text-align:right;transform-origin:right;transform:scaleX(0.9682)">17</div>
<div class="a c" style="left:1724px;top:567.5px;transform-origin:left;transform:scaleX(0.8230)">SER</div>
<div class="a" style="left:25px;top:586px;width:1873px;height:21px;background:#00B050"></div>
<div class="a c" style="left:-297px;top:587.5px;width:400px;text-align:right;transform-origin:right;transform:scaleX(0.9682)">1</div>
<div class="a c" style="left:108px;top:587.5px;transform-origin:left;transform:scaleX(0.9228)">GC-939-KA</div>
<div class="a c" style="left:-132px;top:587.5px;width:400px;text-align:right;transform-origin:right;transform:scaleX(1.0451)">14/10/2021</div>
<div class="a c" style="left:-52px;top:587.5px;width:400px;text-align:right;transform-origin:right;transform:scaleX(0.9881)">0,54</div>
<div class="a c" style="left:353px;top:587.5px;transform-origin:left;transform:scaleX(0.8967)">PEUGEOT</div>
<div class="a c" style="left:309.0px;top:587.5px;width:400px;text-align:center;transform:scaleX(1.0451)">13/05/2025</div>
<div class="a c" style="left:393.0px;top:587.5px;width:400px;text-align:center;transform:scaleX(1.0451)">22/05/2023</div>
<div class="a c" style="left:722px;top:587.5px;transform-origin:left;transform:scaleX(0.9225)">PEUG 3008</div>
<div class="a c" style="left:802px;top:587.5px;transform-origin:left;transform:scaleX(0.9226)">VP</div>
<div class="a c" style="left:882px;top:587.5px;transform-origin:left;transform:scaleX(0.8369)">ESSENCE</div>
<div class="a c" style="left:962px;top:587.5px;transform-origin:left;transform:scaleX(0.8874)">SDG</div>
<div class="a c" style="left:1042px;top:587.5px;transform-origin:left;transform:scaleX(1.0234)">DII</div>
<div class="a c" style="left:1040px;top:587.5px;width:400px;text-align:right;transform-origin:right;transform:scaleX(0.9682)">808</div>
<div class="a c" style="left:1120px;top:587.5px;width:400px;text-align:right;transform-origin:right;transform:scaleX(0.9682)">4947</div>
<div class="a c" style="left:1239px;top:587.5px;width:400px;text-align:right;transform-origin:right;transform:scaleX(1.0177)">28/03/2022 08:00</div>
<div class="a c" style="left:1319px;top:587.5px;width:400px;text-align:right;transform-origin:right;transform:scaleX(0.9682)">760</div>
<div class="a c" style="left:1724px;top:587.5px;transform-origin:left;transform:scaleX(0.9232)">FONC</div>
<div class="a c" style="left:1804px;top:587.5px;transform-origin:left;transform:scaleX(0.9587)">DD</div>
<div class="a c" style="left:1885px;top:587.5px;transform-origin:left;transform:scaleX(0.9960)">1.2</div>
<div class="a c" style="left:-297px;top:607.5px;width:400px;text-align:right;transform-origin:right;transform:scaleX(0.9682)">1</div>
<div class="a c" style="left:108px;top:607.5px;transform-origin:left;transform:scaleX(0.9228)">GC-578-KP</div>
<div class="a c" style="left:-132px;top:607.5px;width:400px;text-align:right;transform-origin:right;transform:scaleX(1.0451)">15/10/2021</div>
<div class="a c" style="left:-52px;top:607.5px;width:400px;text-align:right;transform-origin:right;transform:scaleX(0.9881)">0,54</div>
<div class="a c" style="left:353px;top:607.5px;transform-origin:left;transform:scaleX(0.8967)">PEUGEOT</div>
<div class="a c" style="left:722px;top:607.5px;transform-origin:left;transform:scaleX(0.8925)">PEUG EXP 4</div>
<div class="a c" style="left:802px;top:607.5px;transform-origin:left;transform:scaleX(0.9414)">VU</div>
<div class="a c" style="left:882px;top:607.5px;transform-origin:left;transform:scaleX(0.9395)">GO</div>
<div class="a c" style="left:962px;top:607.5px;transform-origin:left;transform:scaleX(0.9058)">RATP INFRA</div>
<div class="a c" style="left:1042px;top:607.5px;transform-origin:left;transform:scaleX(0.9335)">VOIE</div>
<div class="a c" style="left:1205px;top:607.5px;transform-origin:left;transform:scaleX(0.9839)">MET</div>
<div class="a c" style="left:1285px;top:607.5px;transform-origin:left;transform:scaleX(1.0452)">MTW1</div>
<div class="a c" style="left:1040px;top:607.5px;width:400px;text-align:right;transform-origin:right;transform:scaleX(0.9682)">31</div>
<div class="a c" style="left:1120px;top:607.5px;width:400px;text-align:right;transform-origin:right;transform:scaleX(0.9682)">185</div>
<div class="a c" style="left:1239px;top:607.5px;width:400px;text-align:right;transform-origin:right;transform:scaleX(1.0177)">13/04/2022 08:00</div>
<div class="a c" style="left:1319px;top:607.5px;width:400px;text-align:right;transform-origin:right;transform:scaleX(0.9682)">29</div>
<div class="a c" style="left:1724px;top:607.5px;transform-origin:left;transform:scaleX(0.8230)">SER</div>
<div class="a c" style="left:1885px;top:607.5px;transform-origin:left;transform:scaleX(0.9960)">1.6</div>
<div class="a" style="left:25px;top:626px;width:1873px;height:21px;background:#00B050"></div>
<div class="a c" style="left:-297px;top:627.5px;width:400px;text-align:right;transform-origin:right;transform:scaleX(0.9682)">1</div>
<div class="a c" style="left:108px;top:627.5px;transform-origin:left;transform:scaleX(0.9228)">GC-432-VP</div>
<div class="a c" style="left:-132px;top:627.5px;width:400px;text-align:right;transform-origin:right;transform:scaleX(1.0451)">04/11/2021</div>
<div class="a c" style="left:-52px;top:627.5px;width:400px;text-align:right;transform-origin:right;transform:scaleX(0.9881)">0,48</div>
<div class="a c" style="left:353px;top:627.5px;transform-origin:left;transform:scaleX(0.8967)">PEUGEOT</div>
<div class="a c" style="left:309.0px;top:627.5px;width:400px;text-align:center;transform:scaleX(1.0451)">03/11/2025</div>
<div class="a c" style="left:393.0px;top:627.5px;width:400px;text-align:center;transform:scaleX(1.0451)">03/11/2022</div>
<div class="a c" style="left:722px;top:627.5px;transform-origin:left;transform:scaleX(0.8925)">PEUG EXP 4</div>
<div class="a c" style="left:802px;top:627.5px;transform-origin:left;transform:scaleX(0.9414)">VU</div>
<div class="a c" style="left:882px;top:627.5px;transform-origin:left;transform:scaleX(0.9395)">GO</div>
<div class="a c" style="left:962px;top:627.5px;transform-origin:left;transform:scaleX(1.0101)">M2E</div>
<div class="a c" style="left:1042px;top:627.5px;transform-origin:left;transform:scaleX(1.0572)">Maintenance courante</div>
<div class="a c" style="left:1205px;top:627.5px;transform-origin:left;transform:scaleX(0.8979)">BNE</div>
<div class="a c" style="left:1285px;top:627.5px;transform-origin:left;transform:scaleX(0.8760)">CHZY</div>
<div class="a c" style="left:1040px;top:627.5px;width:400px;text-align:right;transform-origin:right;transform:scaleX(0.9682)">172557</div>
<div class="a c" style="left:1120px;top:627.5px;width:400px;text-align:right;transform-origin:right;transform:scaleX(0.9682)">8920</div>
<div class="a c" style="left:1239px;top:627.5px;width:400px;text-align:right;transform-origin:right;transform:scaleX(1.0177)">01/04/2022 07:31</div>
<div class="a c" style="left:1319px;top:627.5px;width:400px;text-align:right;transform-origin:right;transform:scaleX(0.9682)">1533</div>
<div class="a c" style="left:1724px;top:627.5px;transform-origin:left;transform:scaleX(0.8230)">SER</div>
<div class="a c" style="left:1885px;top:627.5px;transform-origin:left;transform:scaleX(0.9960)">1.6</div>
<div class="a" style="left:25px;top:646px;width:1873px;height:21px;background:#00B050"></div>
<div class="a c" style="left:-297px;top:647.5px;width:400px;text-align:right;transform-origin:right;transform:scaleX(0.9682)">1</div>
<div class="a c" style="left:108px;top:647.5px;transform-origin:left;transform:scaleX(0.9228)">GC-429-VP</div>
<div class="a c" style="left:-132px;top:647.5px;width:400px;text-align:right;transform-origin:right;transform:scaleX(1.0451)">04/11/2021</div>
<div class="a c" style="left:-52px;top:647.5px;width:400px;text-align:right;transform-origin:right;transform:scaleX(0.9881)">0,48</div>
<div class="a c" style="left:353px;top:647.5px;transform-origin:left;transform:scaleX(0.8967)">PEUGEOT</div>
<div class="a c" style="left:309.0px;top:647.5px;width:400px;text-align:center;transform:scaleX(1.0451)">03/11/2023</div>
<div class="a c" style="left:393.0px;top:647.5px;width:400px;text-align:center;transform:scaleX(1.0451)">03/11/2023</div>
<div class="a c" style="left:722px;top:647.5px;transform-origin:left;transform:scaleX(0.8925)">PEUG EXP 4</div>
<div class="a c" style="left:802px;top:647.5px;transform-origin:left;transform:scaleX(0.9414)">VU</div>
<div class="a c" style="left:882px;top:647.5px;transform-origin:left;transform:scaleX(0.9395)">GO</div>
<div class="a c" style="left:962px;top:647.5px;transform-origin:left;transform:scaleX(1.0101)">M2E</div>
<div class="a c" style="left:1042px;top:647.5px;transform-origin:left;transform:scaleX(1.0572)">Maintenance courante</div>
<div class="a c" style="left:1205px;top:647.5px;transform-origin:left;transform:scaleX(0.8979)">BNE</div>
<div class="a c" style="left:1285px;top:647.5px;transform-origin:left;transform:scaleX(0.8760)">CHZY</div>
<div class="a c" style="left:1040px;top:647.5px;width:400px;text-align:right;transform-origin:right;transform:scaleX(0.9682)">152</div>
<div class="a c" style="left:1120px;top:647.5px;width:400px;text-align:right;transform-origin:right;transform:scaleX(0.9682)">781</div>
<div class="a c" style="left:1239px;top:647.5px;width:400px;text-align:right;transform-origin:right;transform:scaleX(1.0177)">07/04/2022 10:04</div>
<div class="a c" style="left:1319px;top:647.5px;width:400px;text-align:right;transform-origin:right;transform:scaleX(0.9682)">134</div>
<div class="a c" style="left:1724px;top:647.5px;transform-origin:left;transform:scaleX(0.8230)">SER</div>
<div class="a c" style="left:1885px;top:647.5px;transform-origin:left;transform:scaleX(0.9960)">1.6</div>
<div class="a" style="left:25px;top:666px;width:1873px;height:21px;background:#00B050"></div>
<div class="a c" style="left:-297px;top:667.5px;width:400px;text-align:right;transform-origin:right;transform:scaleX(0.9682)">1</div>
<div class="a c" style="left:108px;top:667.5px;transform-origin:left;transform:scaleX(0.9228)">GC-410-VP</div>
<div class="a c" style="left:-132px;top:667.5px;width:400px;text-align:right;transform-origin:right;transform:scaleX(1.0451)">04/11/2021</div>
<div class="a c" style="left:-52px;top:667.5px;width:400px;text-align:right;transform-origin:right;transform:scaleX(0.9881)">0,48</div>
<div class="a c" style="left:353px;top:667.5px;transform-origin:left;transform:scaleX(0.8967)">PEUGEOT</div>
<div class="a c" style="left:309.0px;top:667.5px;width:400px;text-align:center;transform:scaleX(1.0451)">03/11/2025</div>
<div class="a c" style="left:393.0px;top:667.5px;width:400px;text-align:center;transform:scaleX(1.0451)">18/11/2023</div>
<div class="a c" style="left:722px;top:667.5px;transform-origin:left;transform:scaleX(0.8925)">PEUG EXP 4</div>
<div class="a c" style="left:802px;top:667.5px;transform-origin:left;transform:scaleX(0.9414)">VU</div>
<div class="a c" style="left:882px;top:667.5px;transform-origin:left;transform:scaleX(0.9395)">GO</div>
<div class="a c" style="left:962px;top:667.5px;transform-origin:left;transform:scaleX(1.0101)">M2E</div>
<div class="a c" style="left:1042px;top:667.5px;transform-origin:left;transform:scaleX(1.0572)">Maintenance courante</div>
<div class="a c" style="left:1205px;top:667.5px;transform-origin:left;transform:scaleX(0.8979)">BNE</div>
<div class="a c" style="left:1285px;top:667.5px;transform-origin:left;transform:scaleX(0.8760)">CHZY</div>
<div class="a c" style="left:1040px;top:667.5px;width:400px;text-align:right;transform-origin:right;transform:scaleX(0.9682)">743</div>
<div class="a c" style="left:1120px;top:667.5px;width:400px;text-align:right;transform-origin:right;transform:scaleX(0.9682)">4027</div>
<div class="a c" style="left:1239px;top:667.5px;width:400px;text-align:right;transform-origin:right;transform:scaleX(1.0177)">15/04/2022 13:58</div>
<div class="a c" style="left:1319px;top:667.5px;width:400px;text-align:right;transform-origin:right;transform:scaleX(0.9682)">692</div>
<div class="a c" style="left:1724px;top:667.5px;transform-origin:left;transform:scaleX(0.8230)">SER</div>
<div class="a c" style="left:1885px;top:667.5px;transform-origin:left;transform:scaleX(0.9960)">1.6</div>
<div class="a c" style="left:-297px;top:687.5px;width:400px;text-align:right;transform-origin:right;transform:scaleX(0.9682)">1</div>
<div class="a c" style="left:108px;top:687.5px;transform-origin:left;transform:scaleX(0.9074)">GC-280-JB</div>
<div class="a c" style="left:-132px;top:687.5px;width:400px;text-align:right;transform-origin:right;transform:scaleX(1.0451)">13/10/2021</div>
<div class="a c" style="left:-52px;top:687.5px;width:400px;text-align:right;transform-origin:right;transform:scaleX(0.9881)">0,55</div>
<div class="a c" style="left:353px;top:687.5px;transform-origin:left;transform:scaleX(0.8833)">RENAULT TRUCKS</div>
<div class="a c" style="left:722px;top:687.5px;transform-origin:left;transform:scaleX(0.9516)">D26 WIDE P6</div>
<div class="a c" style="left:802px;top:687.5px;transform-origin:left;transform:scaleX(0.8805)">PL</div>
<div class="a c" style="left:882px;top:687.5px;transform-origin:left;transform:scaleX(0.9229)">GNV</div>
<div class="a c" style="left:962px;top:687.5px;transform-origin:left;transform:scaleX(0.9229)">DPG</div>
<div class="a c" style="left:1042px;top:687.5px;transform-origin:left;transform:scaleX(0.8958)">LDT</div>
<div class="a c" style="left:1205px;top:687.5px;transform-origin:left;transform:scaleX(0.8981)">TRANSPORT</div>
<div class="a c" style="left:1285px;top:687.5px;transform-origin:left;transform:scaleX(0.8883)">BOISSY</div>
<div class="a c" style="left:1040px;top:687.5px;width:400px;text-align:right;transform-origin:right;transform:scaleX(0.9682)">953</div>
<div class="a c" style="left:1120px;top:687.5px;width:400px;text-align:right;transform-origin:right;transform:scaleX(0.9682)">5603</div>
<div class="a c" style="left:1239px;top:687.5px;width:400px;text-align:right;transform-origin:right;transform:scaleX(1.0177)">07/04/2022 07:58</div>
<div class="a c" style="left:1319px;top:687.5px;width:400px;text-align:right;transform-origin:right;transform:scaleX(0.9682)">856</div>
<div class="a c" style="left:1724px;top:687.5px;transform-origin:left;transform:scaleX(0.8230)">SER</div>
<div class="a c" style="left:-297px;top:707.5px;width:400px;text-align:right;transform-origin:right;transform:scaleX(0.9682)">1</div>
<div class="a c" style="left:108px;top:707.5px;transform-origin:left;transform:scaleX(0.9074)">GC-205-JB</div>
<div class="a c" style="left:-132px;top:707.5px;width:400px;text-align:right;transform-origin:right;transform:scaleX(1.0451)">13/10/2021</div>
<div class="a c" style="left:-52px;top:707.5px;width:400px;text-align:right;transform-origin:right;transform:scaleX(0.9881)">0,55</div>
<div class="a c" style="left:353px;top:707.5px;transform-origin:left;transform:scaleX(0.8833)">RENAULT TRUCKS</div>
<div class="a c" style="left:722px;top:707.5px;transform-origin:left;transform:scaleX(0.9516)">D26 WIDE P6</div>
<div class="a c" style="left:802px;top:707.5px;transform-origin:left;transform:scaleX(0.8805)">PL</div>
<div class="a c" style="left:882px;top:707.5px;transform-origin:left;transform:scaleX(0.9229)">GNV</div>
<div class="a c" style="left:962px;top:707.5px;transform-origin:left;transform:scaleX(0.9229)">DPG</div>
<div class="a c" style="left:1042px;top:707.5px;transform-origin:left;transform:scaleX(0.8958)">LDT</div>
<div class="a c" style="left:1205px;top:707.5px;transform-origin:left;transform:scaleX(0.8981)">TRANSPORT</div>
<div class="a c" style="left:1285px;top:707.5px;transform-origin:left;transform:scaleX(0.8883)">BOISSY</div>
<div class="a c" style="left:1040px;top:707.5px;width:400px;text-align:right;transform-origin:right;transform:scaleX(0.9682)">608</div>
<div class="a c" style="left:1120px;top:707.5px;width:400px;text-align:right;transform-origin:right;transform:scaleX(0.9682)">2560</div>
<div class="a c" style="left:1239px;top:707.5px;width:400px;text-align:right;transform-origin:right;transform:scaleX(1.0177)">16/02/2022 07:35</div>
<div class="a c" style="left:1319px;top:707.5px;width:400px;text-align:right;transform-origin:right;transform:scaleX(0.9682)">391</div>
<div class="a c" style="left:1724px;top:707.5px;transform-origin:left;transform:scaleX(0.8230)">SER</div>
<div class="a c" style="left:-297px;top:727.5px;width:400px;text-align:right;transform-origin:right;transform:scaleX(0.9682)">1</div>
<div class="a c" style="left:108px;top:727.5px;transform-origin:left;transform:scaleX(0.9130)">GC-124-SH</div>
<div class="a c" style="left:-132px;top:727.5px;width:400px;text-align:right;transform-origin:right;transform:scaleX(1.0451)">29/10/2021</div>
<div class="a c" style="left:-52px;top:727.5px;width:400px;text-align:right;transform-origin:right;transform:scaleX(0.9881)">0,50</div>
<div class="a c" style="left:353px;top:727.5px;transform-origin:left;transform:scaleX(0.8833)">RENAULT TRUCKS</div>
<div class="a c" style="left:722px;top:727.5px;transform-origin:left;transform:scaleX(0.9516)">D26 WIDE P6</div>
<div class="a c" style="left:802px;top:727.5px;transform-origin:left;transform:scaleX(0.8805)">PL</div>
<div class="a c" style="left:882px;top:727.5px;transform-origin:left;transform:scaleX(0.9229)">GNV</div>
<div class="a c" style="left:962px;top:727.5px;transform-origin:left;transform:scaleX(0.9229)">DPG</div>
<div class="a c" style="left:1042px;top:727.5px;transform-origin:left;transform:scaleX(0.8958)">LDT</div>
<div class="a c" style="left:1205px;top:727.5px;transform-origin:left;transform:scaleX(0.8981)">TRANSPORT</div>
<div class="a c" style="left:1285px;top:727.5px;transform-origin:left;transform:scaleX(0.9464)">ORNANO</div>
<div class="a c" style="left:1040px;top:727.5px;width:400px;text-align:right;transform-origin:right;transform:scaleX(0.9682)">847</div>
<div class="a c" style="left:1120px;top:727.5px;width:400px;text-align:right;transform-origin:right;transform:scaleX(0.9682)">4759</div>
<div class="a c" style="left:1239px;top:727.5px;width:400px;text-align:right;transform-origin:right;transform:scaleX(1.0177)">15/04/2022 04:58</div>
<div class="a c" style="left:1319px;top:727.5px;width:400px;text-align:right;transform-origin:right;transform:scaleX(0.9682)">791</div>
<div class="a c" style="left:1724px;top:727.5px;transform-origin:left;transform:scaleX(0.8230)">SER</div>
<div class="a c" style="left:-297px;top:747.5px;width:400px;text-align:right;transform-origin:right;transform:scaleX(0.9682)">1</div>
<div class="a c" style="left:108px;top:747.5px;transform-origin:left;transform:scaleX(0.9074)">GC-098-JB</div>
<div class="a c" style="left:-132px;top:747.5px;width:400px;text-align:right;transform-origin:right;transform:scaleX(1.0451)">13/10/2021</div>
<div class="a c" style="left:-52px;top:747.5px;width:400px;text-align:right;transform-origin:right;transform:scaleX(0.9881)">0,55</div>
<div class="a c" style="left:353px;top:747.5px;transform-origin:left;transform:scaleX(0.8833)">RENAULT TRUCKS</div>
<div class="a c" style="left:722px;top:747.5px;transform-origin:left;transform:scaleX(0.9516)">D26 WIDE P6</div>
<div class="a c" style="left:802px;top:747.5px;transform-origin:left;transform:scaleX(0.8805)">PL</div>
<div class="a c" style="left:882px;top:747.5px;transform-origin:left;transform:scaleX(0.9229)">GNV</div>
<div class="a c" style="left:962px;top:747.5px;transform-origin:left;transform:scaleX(0.9229)">DPG</div>
<div class="a c" style="left:1042px;top:747.5px;transform-origin:left;transform:scaleX(0.8958)">LDT</div>
<div class="a c" style="left:1205px;top:747.5px;transform-origin:left;transform:scaleX(0.8981)">TRANSPORT</div>
<div class="a c" style="left:1285px;top:747.5px;transform-origin:left;transform:scaleX(0.8883)">BOISSY</div>
<div class="a c" style="left:1040px;top:747.5px;width:400px;text-align:right;transform-origin:right;transform:scaleX(0.9682)">871</div>
<div class="a c" style="left:1120px;top:747.5px;width:400px;text-align:right;transform-origin:right;transform:scaleX(0.9682)">5148</div>
<div class="a c" style="left:1239px;top:747.5px;width:400px;text-align:right;transform-origin:right;transform:scaleX(1.0177)">07/04/2022 13:34</div>
<div class="a c" style="left:1319px;top:747.5px;width:400px;text-align:right;transform-origin:right;transform:scaleX(0.9682)">787</div>
<div class="a c" style="left:1724px;top:747.5px;transform-origin:left;transform:scaleX(0.8230)">SER</div>
<div class="a c" style="left:-297px;top:767.5px;width:400px;text-align:right;transform-origin:right;transform:scaleX(0.9682)">1</div>
<div class="a c" style="left:108px;top:767.5px;transform-origin:left;transform:scaleX(0.9414)">GC-074-GW</div>
<div class="a c" style="left:-132px;top:767.5px;width:400px;text-align:right;transform-origin:right;transform:scaleX(1.0451)">08/11/2021</div>
<div class="a c" style="left:-52px;top:767.5px;width:400px;text-align:right;transform-origin:right;transform:scaleX(0.9881)">0,47</div>
<div class="a c" style="left:353px;top:767.5px;transform-origin:left;transform:scaleX(0.8967)">PEUGEOT</div>
<div class="a c" style="left:722px;top:767.5px;transform-origin:left;transform:scaleX(0.8925)">PEUG EXP 4</div>
<div class="a c" style="left:802px;top:767.5px;transform-origin:left;transform:scaleX(0.9414)">VU</div>
<div class="a c" style="left:882px;top:767.5px;transform-origin:left;transform:scaleX(0.9395)">GO</div>
<div class="a c" style="left:962px;top:767.5px;transform-origin:left;transform:scaleX(0.9058)">RATP INFRA</div>
<div class="a c" style="left:1042px;top:767.5px;transform-origin:left;transform:scaleX(0.9335)">VOIE</div>
<div class="a c" style="left:1205px;top:767.5px;transform-origin:left;transform:scaleX(0.9839)">MET</div>
<div class="a c" style="left:1040px;top:767.5px;width:400px;text-align:right;transform-origin:right;transform:scaleX(0.9682)">25</div>
<div class="a c" style="left:1120px;top:767.5px;width:400px;text-align:right;transform-origin:right;transform:scaleX(0.9682)">144</div>
<div class="a c" style="left:1239px;top:767.5px;width:400px;text-align:right;transform-origin:right;transform:scaleX(1.0177)">22/02/2022 08:00</div>
<div class="a c" style="left:1319px;top:767.5px;width:400px;text-align:right;transform-origin:right;transform:scaleX(0.9682)">25</div>
<div class="a c" style="left:1724px;top:767.5px;transform-origin:left;transform:scaleX(0.8230)">SER</div>
<div class="a c" style="left:1885px;top:767.5px;transform-origin:left;transform:scaleX(0.9960)">1.6</div>
<div class="a c" style="left:-297px;top:787.5px;width:400px;text-align:right;transform-origin:right;transform:scaleX(0.9682)">1</div>
<div class="a c" style="left:108px;top:787.5px;transform-origin:left;transform:scaleX(0.9130)">GC-009-RA</div>
<div class="a c" style="left:-132px;top:787.5px;width:400px;text-align:right;transform-origin:right;transform:scaleX(1.0451)">27/10/2021</div>
<div class="a c" style="left:-52px;top:787.5px;width:400px;text-align:right;transform-origin:right;transform:scaleX(0.9881)">0,51</div>
<div class="a c" style="left:353px;top:787.5px;transform-origin:left;transform:scaleX(0.8967)">PEUGEOT</div>
<div class="a c" style="left:722px;top:787.5px;transform-origin:left;transform:scaleX(0.8614)">E-EXPERT</div>
<div class="a c" style="left:802px;top:787.5px;transform-origin:left;transform:scaleX(0.9414)">VU</div>
<div class="a c" style="left:882px;top:787.5px;transform-origin:left;transform:scaleX(0.8788)">ELECTRIQUE</div>
<div class="a c" style="left:962px;top:787.5px;transform-origin:left;transform:scaleX(0.9584)">SEM</div>
<div class="a c" style="left:1042px;top:787.5px;transform-origin:left;transform:scaleX(0.8651)">GARES A</div>
<div class="a c" style="left:1205px;top:787.5px;transform-origin:left;transform:scaleX(0.8687)">SECTEUR OUEST</div>
<div class="a c" style="left:1040px;top:787.5px;width:400px;text-align:right;transform-origin:right;transform:scaleX(0.9682)">10</div>
<div class="a c" style="left:1120px;top:787.5px;width:400px;text-align:right;transform-origin:right;transform:scaleX(0.9682)">1</div>
<div class="a c" style="left:1239px;top:787.5px;width:400px;text-align:right;transform-origin:right;transform:scaleX(1.0177)">27/10/2021 00:00</div>
<div class="a c" style="left:1319px;top:787.5px;width:400px;text-align:right;transform-origin:right;transform:scaleX(0.9682)">0</div>
<div class="a c" style="left:1724px;top:787.5px;transform-origin:left;transform:scaleX(0.8230)">SER</div>
<div class="a c" style="left:1885px;top:787.5px;transform-origin:left;transform:scaleX(0.8176)">EL</div>
<div class="a" style="left:0;top:287px;width:25px;height:19px;background:#e1dfe1"></div>
<div class="a t rh" style="left:0;top:288px;width:25px;height:20px;line-height:20px">11</div>
<div class="a" style="left:24px;top:286px;width:82px;height:22px;border:2px solid #217346;box-shadow:inset 0 0 0 1px #f8f8f8"></div>
<div class="a" style="left:102px;top:304px;width:7px;height:7px;background:#217346;border:1px solid #f8f8f8"></div>
</div>
<div class="a" style="left:1897px;top:227px;width:1px;height:774px;background:#a0a0a0"></div>
<div class="a" style="left:0;top:1001px;width:1920px;height:28px;background:#f8f8f8"></div>
<div class="a" style="left:0;top:1000px;width:1898px;height:1px;background:#c6c6c6"></div>
<svg class="a" style="left:25px;top:1008px;" width="6" height="10" viewBox="0 0 6 10"><polygon points="5,1 1,5 5,9" fill="#bbb"/></svg>
<svg class="a" style="left:55px;top:1008px;" width="6" height="10" viewBox="0 0 6 10"><polygon points="1,1 5,5 1,9" fill="#bbb"/></svg>
<div class="a" style="left:100px;top:1006px;width:1px;height:18px;background:#c6c6c6"></div>
<div class="a" style="left:244px;top:1000px;width:152px;height:25px;background:#f8f8f8;border-bottom:2px solid #217346"></div>
<div class="a" style="left:244px;top:1000px;width:1px;height:25px;background:#c6c6c6"></div>
<div class="a" style="left:395px;top:1000px;width:1px;height:25px;background:#c6c6c6"></div>
<div class="a t" style="left:113.3px;top:1004px;line-height:20px;font-size:13px;color:#444;transform-origin:left;transform:scaleX(0.9995);">Parc global 04-2022</div>
<div class="a t" style="left:256px;top:1004px;line-height:20px;font-size:13px;color:#217346;transform-origin:left;transform:scaleX(0.9819);font-weight:bold;">Parc gestion 04-2022</div>
<div class="a t" style="left:410px;top:1004px;line-height:20px;font-size:13px;color:#444;transform-origin:left;transform:scaleX(0.8934);">PARC DEPARTEMENTS</div>
<div class="a t" style="left:571px;top:1004px;line-height:20px;font-size:13px;color:#444;transform-origin:left;transform:scaleX(0.8771);">PARC CATEGORIE</div>
<div class="a t" style="left:702px;top:1004px;line-height:20px;font-size:13px;color:#444;transform-origin:left;transform:scaleX(0.9116);">KMS PAR DEP</div>
<div class="a t" style="left:811px;top:1004px;line-height:20px;font-size:13px;color:#444;transform-origin:left;transform:scaleX(0.8654);">CRITAIR</div>
<div class="a t" style="left:882px;top:1004px;line-height:20px;font-size:13px;color:#444;transform-origin:left;transform:scaleX(0.8716);">ENERGIE</div>
<div class="a t" style="left:961.5px;top:1004px;line-height:20px;font-size:13px;color:#444;transform-origin:left;transform:scaleX(0.8726);">CRIT AIR DEP</div>
<div class="a" style="left:556px;top:1006px;width:1px;height:18px;background:#c6c6c6"></div>
<div class="a" style="left:688px;top:1006px;width:1px;height:18px;background:#c6c6c6"></div>
<div class="a" style="left:797px;top:1006px;width:1px;height:18px;background:#c6c6c6"></div>
<div class="a" style="left:870px;top:1006px;width:1px;height:18px;background:#c6c6c6"></div>
<div class="a" style="left:946px;top:1006px;width:1px;height:18px;background:#c6c6c6"></div>
<div class="a" style="left:1051px;top:1006px;width:1px;height:18px;background:#c6c6c6"></div>
<svg class="a" style="left:1084px;top:1006px;" width="16" height="16" viewBox="0 0 16 16"><circle cx="8" cy="8" r="7" fill="none" stroke="#555"/><path d="M8 4 V12 M4 8 H12" stroke="#555" stroke-width="1.2"/></svg>
<div class="a t" style="left:1151px;top:1004px;line-height:20px;font-size:12px;color:#aaa;transform-origin:left;">⋮</div>
<div class="a" style="left:1168px;top:1005px;width:731px;height:17px;background:#e8e8e8"></div>
<div class="a" style="left:1169px;top:1006px;width:15px;height:15px;background:#f8f8f8;border:1px solid #9a9a9a"></div>
<svg class="a" style="left:1173px;top:1009px;" width="6" height="9" viewBox="0 0 6 9"><polygon points="5,0.5 1,4.5 5,8.5" fill="#444"/></svg>
<div class="a" style="left:1184px;top:1006px;width:383px;height:15px;background:#f8f8f8;border:1px solid #9a9a9a"></div>
<div class="a" style="left:1881px;top:1006px;width:15px;height:15px;background:#f8f8f8;border:1px solid #9a9a9a"></div>
<svg class="a" style="left:1886px;top:1009px;" width="6" height="9" viewBox="0 0 6 9"><polygon points="1,0.5 5,4.5 1,8.5" fill="#444"/></svg>
<div class="a" style="left:1898px;top:207px;width:22px;height:794px;background:#f8f8f8"></div>
<div class="a" style="left:1902px;top:209px;width:15px;height:15px;background:#f8f8f8;border:1px solid #9a9a9a"></div>
<svg class="a" style="left:1905px;top:213px;" width="9" height="6" viewBox="0 0 9 6"><polygon points="0.5,5 4.5,1 8.5,5" fill="#444"/></svg>
<div class="a" style="left:1902px;top:224px;width:15px;height:17px;background:#f8f8f8;border:1px solid #9a9a9a"></div>
<div class="a" style="left:1902px;top:985px;width:15px;height:15px;background:#f8f8f8;border:1px solid #9a9a9a"></div>
<svg class="a" style="left:1905px;top:990px;" width="9" height="6" viewBox="0 0 9 6"><polygon points="0.5,1 4.5,5 8.5,1" fill="#444"/></svg>
<div class="a" style="left:0;top:1029px;width:1920px;height:21px;background:#217346"></div>
<div class="a t" style="left:7.5px;top:1030px;line-height:20px;font-size:12.5px;color:#fff;transform-origin:left;transform:scaleX(0.8375);">Prêt</div>
<svg class="a" style="left:46px;top:1032px;" width="16" height="14" viewBox="0 0 16 14"><rect x="1" y="1" width="13" height="11" fill="none" stroke="#fff"/><path d="M1 4 H14 M3 6.5 H6 M3 9 H6" stroke="#fff"/><circle cx="10" cy="9" r="3" fill="#217346" stroke="#fff"/><circle cx="10" cy="9" r="1" fill="#fff"/></svg>
<div class="a" style="left:1617px;top:1029px;width:40px;height:21px;background:#0a4a24"></div>
<svg class="a" style="left:1630px;top:1032px;" width="14" height="14" viewBox="0 0 14 14"><path d="M0.5 0.5 H13.5 V13.5 H0.5 Z M0.5 4.8 H13.5 M0.5 9.2 H13.5 M4.8 0.5 V13.5 M9.2 0.5 V13.5" fill="none" stroke="#fff" stroke-width="1.1"/></svg>
<svg class="a" style="left:1670px;top:1032px;" width="15" height="14" viewBox="0 0 15 14"><rect x="0.5" y="0.5" width="14" height="13" fill="none" stroke="#fff"/><rect x="3.5" y="3" width="8" height="8" fill="none" stroke="#fff"/><path d="M5 5.5 H10 M5 7.5 H10" stroke="#fff"/></svg>
<svg class="a" style="left:1710px;top:1032px;" width="15" height="14" viewBox="0 0 15 14"><path d="M0.5 0.5 H14.5 V13.5 H0.5 Z M0.5 7 H8 V0.5 M4.5 0.5 V7" fill="none" stroke="#fff"/></svg>
<div class="a" style="left:1743px;top:1038px;width:8px;height:1px;background:#fff"></div>
<div class="a" style="left:1756px;top:1039px;width:100px;height:1px;background:#fff"></div>
<div class="a" style="left:1803px;top:1033px;width:5px;height:12px;background:#fff"></div>
<svg class="a" style="left:1860px;top:1034px;" width="10" height="10" viewBox="0 0 10 10"><path d="M5 0 V10 M0 5 H10" stroke="#fff" stroke-width="1.1"/></svg>
<div class="a t" style="left:1882.5px;top:1030px;line-height:20px;font-size:12.5px;color:#fff;transform-origin:left;transform:scaleX(0.8239);">100 %</div>
<div class="a" style="left:0;top:1050px;width:1920px;height:30px;background:#1c1c1c"></div>
<svg class="a" style="left:10px;top:1057px;" width="16" height="16" viewBox="0 0 16 16"><g fill="#fff"><path d="M0 2 L7 1 V7.5 H0 Z"/><path d="M8 0.9 L16 0 V7.5 H8 Z"/><path d="M0 8.5 H7 V15 L0 14 Z"/><path d="M8 8.5 H16 V16 L8 15.1 Z"/></g></svg>
<svg class="a" style="left:46px;top:1057px;" width="16" height="16" viewBox="0 0 16 16"><path d="M1 2.5 H11 M1 13.5 H11 M2 5.5 H10 V10.5 H2 Z M14 2 V14" fill="none" stroke="#fff" stroke-width="1.2"/></svg>
<svg class="a" style="left:84px;top:1057px;" width="16" height="15" viewBox="0 0 16 15"><path d="M0 2 H6 L8 4 H16 V14 H0 Z" fill="#f9c94b"/><rect x="0" y="5" width="16" height="9" fill="#ffd863"/><rect x="5" y="9" width="6" height="5" fill="#2b86d8"/><rect x="7" y="11" width="2" height="3" fill="#ffd863"/></svg>
<svg class="a" style="left:122px;top:1057px;" width="16" height="15" viewBox="0 0 16 15"><path d="M0 2 H6 L8 4 H16 V14 H0 Z" fill="#f9c94b"/><rect x="0" y="5" width="16" height="9" fill="#ffd863"/><rect x="5" y="9" width="6" height="5" fill="#2b86d8"/><rect x="7" y="11" width="2" height="3" fill="#ffd863"/></svg>
<svg class="a" style="left:160px;top:1056px;" width="12" height="16" viewBox="0 0 12 16"><rect x="1" y="1" width="10" height="14" fill="#fff" stroke="#000"/><path d="M3 4 H9 M3 7 H9 M3 10 H9" stroke="#444"/></svg>
<svg class="a" style="left:196px;top:1057px;" width="16" height="16" viewBox="0 0 16 16"><circle cx="8" cy="8" r="7.5" fill="#2b86d8"/><circle cx="8" cy="8" r="3" fill="#1a4f8a"/><circle cx="8" cy="3.5" r="1.6" fill="#cde"/><circle cx="4" cy="10" r="1.6" fill="#cde"/><circle cx="12" cy="10" r="1.6" fill="#cde"/></svg>
<svg class="a" style="left:233px;top:1056px;" width="16" height="16" viewBox="0 0 16 16"><rect x="1" y="3" width="3" height="13" fill="#8b3a2a"/><rect x="5" y="1" width="3" height="15" fill="#c4a14a"/><rect x="9" y="4" width="3" height="12" fill="#4a78b8"/><rect x="12" y="6" width="3" height="10" fill="#6a8fd0" transform="rotate(-15 13 12)"/></svg>
<svg class="a" style="left:269px;top:1057px;" width="16" height="15" viewBox="0 0 16 15"><path d="M2 9 A6 6 0 0 1 14 9" fill="none" stroke="#1030d0" stroke-width="2"/><rect x="0" y="8" width="3" height="6" fill="#1030d0"/><rect x="13" y="8" width="3" height="6" fill="#1030d0"/><circle cx="8" cy="10" r="4" fill="#f0a020"/><rect x="4" y="9" width="8" height="2" fill="#e02020"/></svg>
<svg class="a" style="left:306px;top:1056px;" width="16" height="17" viewBox="0 0 16 17"><rect x="0" y="0" width="16" height="17" fill="#cfe3f7"/><rect x="2" y="3" width="12" height="8" fill="#5aa0e0"/><rect x="7" y="11" width="9" height="6" fill="#e03030"/></svg>
<svg class="a" style="left:343px;top:1056px;" width="17" height="17" viewBox="0 0 17 17"><rect x="0.5" y="0.5" width="16" height="16" fill="#001e36" stroke="#31a8ff"/><text x="2.5" y="12" font-size="9" fill="#31a8ff" font-family="Liberation Sans">Ps</text></svg>
<svg class="a" style="left:380px;top:1056px;" width="17" height="17" viewBox="0 0 17 17"><circle cx="8.5" cy="8.5" r="8" fill="#1f8fd8"/><path d="M3 10 C4 4 13 3 14 9 C12 7 8 7 8 10 C8 13 12 14 15 13 C12 17 4 16 3 10 Z" fill="#7fd45a"/></svg>
<svg class="a" style="left:417px;top:1056px;" width="18" height="17" viewBox="0 0 18 17"><circle cx="9" cy="9" r="8" fill="#ff7139"/><circle cx="9" cy="9" r="5" fill="#9059ff" opacity="0.8"/><path d="M1 9 C2 3 7 0 12 1 C8 2 6 4 7 6 C5 6 3 8 3 11 Z" fill="#ffbd2f"/></svg>
<svg class="a" style="left:454px;top:1056px;" width="17" height="17" viewBox="0 0 17 17"><circle cx="8.5" cy="8.5" r="8" fill="#db4437"/><path d="M8.5 8.5 L15.4 4.5 A8 8 0 0 1 8.5 16.5 Z" fill="#f4b400"/><path d="M8.5 8.5 L8.5 16.5 A8 8 0 0 1 1.6 4.5 Z" fill="#0f9d58"/><circle cx="8.5" cy="8.5" r="3.5" fill="#4285f4" stroke="#fff"/></svg>
<svg class="a" style="left:492px;top:1055px;" width="14" height="18" viewBox="0 0 14 18"><rect x="0.5" y="0.5" width="13" height="17" fill="#5d6b7a"/><rect x="2" y="2" width="10" height="4" fill="#b8d4ee"/><g fill="#c8d0d8"><rect x="2" y="8" width="2.5" height="2"/><rect x="5.8" y="8" width="2.5" height="2"/><rect x="9.5" y="8" width="2.5" height="2"/><rect x="2" y="11.5" width="2.5" height="2"/><rect x="5.8" y="11.5" width="2.5" height="2"/><rect x="9.5" y="11.5" width="2.5" height="2"/><rect x="2" y="15" width="2.5" height="2"/><rect x="5.8" y="15" width="2.5" height="2"/></g></svg>
<svg class="a" style="left:528px;top:1056px;" width="17" height="17" viewBox="0 0 17 17"><circle cx="8.5" cy="8.5" r="8" fill="#7d2ea0"/><path d="M6 4 C11 5 11 12 6 13" fill="none" stroke="#e9d3ff" stroke-width="1.5"/><circle cx="7" cy="8.5" r="1.5" fill="#e9d3ff"/></svg>
<svg class="a" style="left:565px;top:1055px;" width="15" height="18" viewBox="0 0 15 18"><path d="M7.5 1 L14 3 L13 12 L7.5 17 L2 12 L1 3 Z" fill="#fb542b"/><path d="M4 6 L7.5 9 L11 6 L9 12 H6 Z" fill="#fff"/></svg>
<svg class="a" style="left:601px;top:1056px;" width="18" height="17" viewBox="0 0 18 17"><rect x="4" y="1" width="13" height="15" rx="1" fill="#c8313a"/><rect x="0" y="4" width="10" height="10" fill="#a4262c"/><text x="1.5" y="12" font-size="8" fill="#fff" font-weight="bold" font-family="Liberation Sans">A</text></svg>
<svg class="a" style="left:638px;top:1056px;" width="18" height="17" viewBox="0 0 18 17"><rect x="4" y="1" width="13" height="15" rx="1" fill="#41a5ee"/><rect x="4" y="6" width="13" height="5" fill="#2b7cd3"/><rect x="0" y="4" width="10" height="10" fill="#185abd"/><text x="0.5" y="12" font-size="8" fill="#fff" font-weight="bold" font-family="Liberation Sans">W</text></svg>
<div class="a" style="left:666px;top:1050px;width:37px;height:30px;background:#3a3a3a"></div>
<svg class="a" style="left:675px;top:1056px;" width="18" height="17" viewBox="0 0 18 17"><rect x="4" y="1" width="13" height="15" rx="1" fill="#21a366"/><rect x="4" y="6" width="13" height="5" fill="#107c41"/><rect x="0" y="4" width="10" height="10" fill="#185c37"/><text x="1.5" y="12" font-size="8" fill="#fff" font-weight="bold" font-family="Liberation Sans">X</text></svg>
<div class="a" style="left:79px;top:1078px;width:28px;height:2px;background:#76b9ed"></div>
<div class="a" style="left:412px;top:1078px;width:28px;height:2px;background:#76b9ed"></div>
<div class="a" style="left:634px;top:1078px;width:28px;height:2px;background:#76b9ed"></div>
<div class="a" style="left:667px;top:1078px;width:36px;height:2px;background:#76b9ed"></div>
<svg class="a" style="left:1713px;top:1064px;" width="14" height="8" viewBox="0 0 14 8"><polyline points="1,7 7,1 13,7" fill="none" stroke="#fff" stroke-width="1.2"/></svg>
<svg class="a" style="left:1736px;top:1057px;" width="15" height="15" viewBox="0 0 15 15"><rect x="0.5" y="0.5" width="14" height="14" fill="#3a3a2a" stroke="#c8b870"/><rect x="3" y="3" width="2" height="6" fill="#e03030"/><rect x="5" y="3" width="2" height="6" fill="#f0c020"/><rect x="7" y="3" width="2" height="6" fill="#30b030"/><rect x="9" y="3" width="2" height="6" fill="#3080e0"/><rect x="11" y="3" width="1.5" height="6" fill="#a040c0"/></svg>
<svg class="a" style="left:1761px;top:1057px;" width="14" height="16" viewBox="0 0 14 16"><rect x="1" y="4" width="9" height="8" rx="2" fill="none" stroke="#fff" stroke-width="1.1"/><path d="M10 6 L13 5 V11 L10 10" fill="none" stroke="#fff"/></svg>
<svg class="a" style="left:1783px;top:1058px;" width="17" height="14" viewBox="0 0 17 14"><rect x="4.5" y="2.5" width="12" height="8" fill="none" stroke="#fff"/><path d="M10.5 10.5 V13 M7 13.5 H14" stroke="#fff"/><rect x="0.5" y="0.5" width="4" height="4" fill="none" stroke="#fff"/></svg>
<svg class="a" style="left:1808px;top:1058px;" width="17" height="14" viewBox="0 0 17 14"><path d="M1 5 H4 L8 1.5 V12.5 L4 9 H1 Z" fill="none" stroke="#fff"/><path d="M10 5 A3 3 0 0 1 10 9 M12 3 A6 6 0 0 1 12 11 M14 1.5 A8 8 0 0 1 14 12.5" fill="none" stroke="#fff"/></svg>
<div class="a t" style="left:1834.7px;top:1055px;line-height:20px;font-size:12.5px;color:#fff;transform-origin:left;transform:scaleX(0.8344);">13:54</div>
<svg class="a" style="left:1878px;top:1056px;" width="17" height="17" viewBox="0 0 17 17"><path d="M1 1.5 H16 V13 H10 L8 15.5 L6 13 H1 Z" fill="none" stroke="#fff" stroke-width="1.1"/></svg>
<div class="a" style="left:1915px;top:1050px;width:1px;height:30px;background:#666"></div>
<div class="a" style="left:859px;top:111px;width:10px;height:305px;background:rgba(0,0,0,0.075);border-top-right-radius:6px"></div>
<div class="a" style="left:859px;top:113px;width:4px;height:303px;background:rgba(0,0,0,0.06)"></div>
<div class="a" style="left:20px;top:416px;width:849px;height:11px;background:rgba(0,0,0,0.075);clip-path:polygon(0 0,100% 0,98.8% 100%,0.6% 100%)"></div>
<div class="a" style="left:23px;top:416px;width:840px;height:5px;background:rgba(0,0,0,0.06)"></div>
<div class="a" style="left:17px;top:120px;width:6px;height:296px;background:rgba(0,0,0,0.045)"></div>
<div class="a" style="left:23px;top:115px;width:836px;height:300px;background:#f8f8f8;border:1px solid #8a8a8a"></div>
<div class="a t" style="left:32.4px;top:122px;line-height:20px;font-size:12px;color:#000;transform-origin:left;transform:scaleX(0.9816);">Gestionnaire des règles de mise en forme conditionnelle</div>
<div class="a t" style="left:786px;top:121px;line-height:20px;font-size:13px;color:#222;transform-origin:left;">?</div>
<svg class="a" style="left:829px;top:124px;" width="12" height="12" viewBox="0 0 12 12"><path d="M1 1 L11 11 M11 1 L1 11" stroke="#222" stroke-width="1.1"/></svg>
<div class="a t" style="left:31px;top:151px;line-height:20px;font-size:12px;color:#000;transform-origin:left;transform:scaleX(0.9550);">Afficher les règles de mise en forme pour :</div>
<div class="a" style="left:54px;top:166px;width:7px;height:1px;background:#000"></div>
<div class="a" style="left:257px;top:153px;width:156px;height:21px;border:1px solid #c4c4c4;background:#fff"></div>
<div class="a" style="left:259px;top:155px;width:134px;height:17px;background:#99c9ef;border:1px dotted #000"></div>
<div class="a t" style="left:261.3px;top:154px;line-height:20px;font-size:12px;color:#000;transform-origin:left;transform:scaleX(0.9462);">Sélection actuelle</div>
<div class="a" style="left:394px;top:155px;width:17px;height:17px;background:#e5e1e5;border:1px solid #c4c4c4"></div>
<svg class="a" style="left:397.5px;top:160.5px;" width="9.0" height="7.0" viewBox="0 0 9.0 7.0"><polyline points="1,1.75 4.5,5.25 8.0,1.75" fill="none" stroke="#333" stroke-width="1"/></svg>
<div class="a" style="left:30px;top:177px;width:823px;height:205px;border:1px solid #8a8a8a;border-top:2px solid #8a8a8a"></div>
<div class="btn" style="left:33px;top:180px;width:130px;height:24px"></div>
<div class="btn" style="left:174px;top:180px;width:130px;height:24px"></div>
<div class="btn" style="left:315px;top:180px;width:130px;height:24px"></div>
<div class="btn" style="left:456px;top:180px;width:130px;height:24px"></div>
<svg class="a" style="left:46px;top:184px;" width="16" height="16" viewBox="0 0 16 16"><path d="M0.5 0.5 H14.5 V14.5 H0.5 Z M0.5 4.5 H14.5 M0.5 10.5 H14.5 M4.5 0.5 V14.5 M10.5 0.5 V14.5" fill="none" stroke="#333"/><rect x="4.5" y="4.5" width="6" height="6" fill="#f6c9a0" stroke="#e8710a"/></svg>
<div class="a t" style="left:65px;top:183px;line-height:20px;font-size:12px;color:#000;transform-origin:left;transform:scaleX(0.9514);">Nouvelle règle...</div>
<div class="a" style="left:65px;top:198px;width:9px;height:1px;background:#000"></div>
<svg class="a" style="left:182px;top:184px;" width="18" height="17" viewBox="0 0 18 17"><path d="M0.5 0.5 H14.5 V14.5 H0.5 Z M0.5 4.5 H14.5 M0.5 10.5 H14.5 M4.5 0.5 V14.5 M10.5 0.5 V14.5" fill="none" stroke="#333"/><rect x="4.5" y="4.5" width="6" height="6" fill="#f6c9a0" stroke="#e8710a"/><path d="M7 15.5 L15 6" stroke="#2b7cd3" stroke-width="2.2"/></svg>
<div class="a t" style="left:201.3px;top:183px;line-height:20px;font-size:12px;color:#000;transform-origin:left;transform:scaleX(0.9783);">Modifier la règle...</div>
<div class="a" style="left:201px;top:198px;width:11px;height:1px;background:#000"></div>
<svg class="a" style="left:324px;top:184px;" width="14" height="14" viewBox="0 0 14 14"><path d="M1 1 L13 13 M13 1 L1 13" stroke="#e81123" stroke-width="1.2"/></svg>
<div class="a t" style="left:342px;top:183px;line-height:20px;font-size:12px;color:#000;transform-origin:left;transform:scaleX(0.9567);">Supprimer la règle</div>
<div class="a" style="left:342px;top:198px;width:7px;height:1px;background:#000"></div>
<svg class="a" style="left:464px;top:184px;" width="16" height="16" viewBox="0 0 16 16"><path d="M0.5 2.5 V15.5 H13" fill="none" stroke="#333"/><g transform="translate(2,0)"><path d="M0.5 0.5 H14.5 V14.5 H0.5 Z M0.5 4.5 H14.5 M0.5 10.5 H14.5 M4.5 0.5 V14.5 M10.5 0.5 V14.5" fill="none" stroke="#333"/><rect x="4.5" y="4.5" width="6" height="6" fill="#f6c9a0" stroke="#e8710a"/></g></svg>
<div class="a t" style="left:483.3px;top:183px;line-height:20px;font-size:12px;color:#000;transform-origin:left;transform:scaleX(0.9835);">Dupliquer la règle</div>
<div class="a" style="left:484px;top:198px;width:9px;height:1px;background:#000"></div>
<div class="btn" style="left:597px;top:180px;width:24px;height:24px"></div>
<svg class="a" style="left:603px;top:189px;" width="12" height="7" viewBox="0 0 12 7"><polyline points="1,6 6,1 11,6" fill="none" stroke="#bdbdbd" stroke-width="1"/></svg>
<div class="btn" style="left:632px;top:180px;width:24px;height:24px"></div>
<svg class="a" style="left:638px;top:189px;" width="12" height="7" viewBox="0 0 12 7"><polyline points="1,1 6,6 11,1" fill="none" stroke="#2b86d8" stroke-width="1.3"/></svg>
<div class="a" style="left:30px;top:205px;width:823px;height:177px;border:2px solid #8a8a8a;border-right:2px solid #8a8a8a;background:#f8f8f8"></div>
<div class="a t" style="left:37.5px;top:209px;line-height:20px;font-size:12px;color:#000;transform-origin:left;transform:scaleX(0.9757);">Règle (appliquée dans l&#x27;ordre indiqué)</div>
<div class="a" style="left:313px;top:209px;width:1px;height:19px;background:#e6e6e6"></div>
<div class="a t" style="left:318.3px;top:209px;line-height:20px;font-size:12px;color:#000;transform-origin:left;transform:scaleX(0.9289);">Format</div>
<div class="a" style="left:447px;top:209px;width:1px;height:19px;background:#e6e6e6"></div>
<div class="a t" style="left:452px;top:209px;line-height:20px;font-size:12px;color:#000;transform-origin:left;transform:scaleX(0.9714);">S&#x27;applique à</div>
<div class="a" style="left:728px;top:209px;width:1px;height:19px;background:#e6e6e6"></div>
<div class="a t" style="left:733.3px;top:209px;line-height:20px;font-size:12px;color:#000;transform-origin:left;transform:scaleX(0.9595);">Interrompre si Vrai</div>
<div class="a" style="left:831px;top:209px;width:1px;height:19px;background:#e6e6e6"></div>
<div class="a" style="left:33px;top:228px;width:799px;height:29px;background:#e6e1e6"></div>
<div class="a t" style="left:59.2px;top:235px;line-height:20px;font-size:12px;color:#000;transform-origin:left;transform:scaleX(0.9157);">Formule : =$F11&gt;AUJOURDHUI()</div>
<div class="a" style="left:314px;top:232px;width:125px;height:22px;background:#00B050"></div>
<div class="a t" style="left:226.2px;width:300px;text-align:center;top:235px;line-height:20px;font-size:13px;color:#000;transform-origin:center;transform:scaleX(0.9379);">AaBbCcYyZz</div>
<div class="a" style="left:448px;top:233px;width:272px;height:21px;background:#f8f8f8;border:1px solid #bdbdbd"></div>
<div class="a t" style="left:452.5px;top:235px;line-height:20px;font-size:12px;color:#000;transform-origin:left;transform:scaleX(0.9119);">=$A$11:$AN$300</div>
<div class="a" style="left:698px;top:233px;width:22px;height:21px;background:#e6e1e6;border:2px solid #ababab"></div>
<svg class="a" style="left:702px;top:237px;" width="14" height="14" viewBox="0 0 14 14"><path d="M7 2 V10 M3.5 5.5 L7 2 L10.5 5.5" fill="none" stroke="#000" stroke-width="1.8"/><path d="M3 12.5 H11" stroke="#000" stroke-width="1.3"/></svg>
<div class="a" style="left:774px;top:236px;width:13px;height:13px;background:#f8f8f8;border:1px solid #333"></div>
<div class="a t" style="left:59.2px;top:265px;line-height:20px;font-size:12px;color:#000;transform-origin:left;transform:scaleX(0.9157);">Formule : =$F11=AUJOURDHUI()</div>
<div class="a" style="left:314px;top:262px;width:125px;height:22px;background:#FF0000"></div>
<div class="a t" style="left:226.2px;width:300px;text-align:center;top:265px;line-height:20px;font-size:13px;color:#000;transform-origin:center;transform:scaleX(0.9379);">AaBbCcYyZz</div>
<div class="a" style="left:448px;top:263px;width:272px;height:21px;background:#f8f8f8;border:1px solid #bdbdbd"></div>
<div class="a t" style="left:452.5px;top:265px;line-height:20px;font-size:12px;color:#000;transform-origin:left;transform:scaleX(0.9119);">=$A$11:$AN$300</div>
<div class="a" style="left:698px;top:263px;width:22px;height:21px;background:#e6e1e6;border:2px solid #ababab"></div>
<svg class="a" style="left:702px;top:267px;" width="14" height="14" viewBox="0 0 14 14"><path d="M7 2 V10 M3.5 5.5 L7 2 L10.5 5.5" fill="none" stroke="#000" stroke-width="1.8"/><path d="M3 12.5 H11" stroke="#000" stroke-width="1.3"/></svg>
<div class="a" style="left:774px;top:266px;width:13px;height:13px;background:#f8f8f8;border:1px solid #333"></div>
<div class="a t" style="left:59.2px;top:295px;line-height:20px;font-size:12px;color:#000;transform-origin:left;transform:scaleX(0.9245);">Formule : =$F11&gt;=AUJOURDHUI()-30</div>
<div class="a" style="left:314px;top:292px;width:125px;height:22px;background:#ED7D31"></div>
<div class="a t" style="left:226.2px;width:300px;text-align:center;top:295px;line-height:20px;font-size:13px;color:#000;transform-origin:center;transform:scaleX(0.9379);">AaBbCcYyZz</div>
<div class="a" style="left:448px;top:293px;width:272px;height:21px;background:#f8f8f8;border:1px solid #bdbdbd"></div>
<div class="a t" style="left:452.5px;top:295px;line-height:20px;font-size:12px;color:#000;transform-origin:left;transform:scaleX(0.9119);">=$A$11:$AN$300</div>
<div class="a" style="left:698px;top:293px;width:22px;height:21px;background:#e6e1e6;border:2px solid #ababab"></div>
<svg class="a" style="left:702px;top:297px;" width="14" height="14" viewBox="0 0 14 14"><path d="M7 2 V10 M3.5 5.5 L7 2 L10.5 5.5" fill="none" stroke="#000" stroke-width="1.8"/><path d="M3 12.5 H11" stroke="#000" stroke-width="1.3"/></svg>
<div class="a" style="left:774px;top:296px;width:13px;height:13px;background:#f8f8f8;border:1px solid #333"></div>
<div class="a" style="left:610px;top:385px;width:73px;height:21px;background:#e5e1e5;border:2px solid #0078d7"></div>
<div class="a t" style="left:496.79999999999995px;width:300px;text-align:center;top:386px;line-height:20px;font-size:12px;color:#000;transform-origin:center;transform:scaleX(0.8536);">OK</div>
<div class="btn" style="left:694px;top:385px;width:73px;height:21px"></div>
<div class="a t" style="left:580.5px;width:300px;text-align:center;top:386px;line-height:20px;font-size:12px;color:#000;transform-origin:center;transform:scaleX(0.9052);">Fermer</div>
<div class="btn" style="left:778px;top:385px;width:73px;height:21px"></div>
<div class="a t" style="left:664.5px;width:300px;text-align:center;top:386px;line-height:20px;font-size:12px;color:#a0a0a0;transform-origin:center;transform:scaleX(1.0059);">Appliquer</div>
<svg class="a" style="left:848px;top:405px;" width="8" height="8" viewBox="0 0 8 8"><g fill="#b8b8b8"><rect x="6" y="0" width="2" height="2"/><rect x="3" y="3" width="2" height="2"/><rect x="6" y="3" width="2" height="2"/><rect x="0" y="6" width="2" height="2"/><rect x="3" y="6" width="2" height="2"/><rect x="6" y="6" width="2" height="2"/></g></svg>
</body></html>
